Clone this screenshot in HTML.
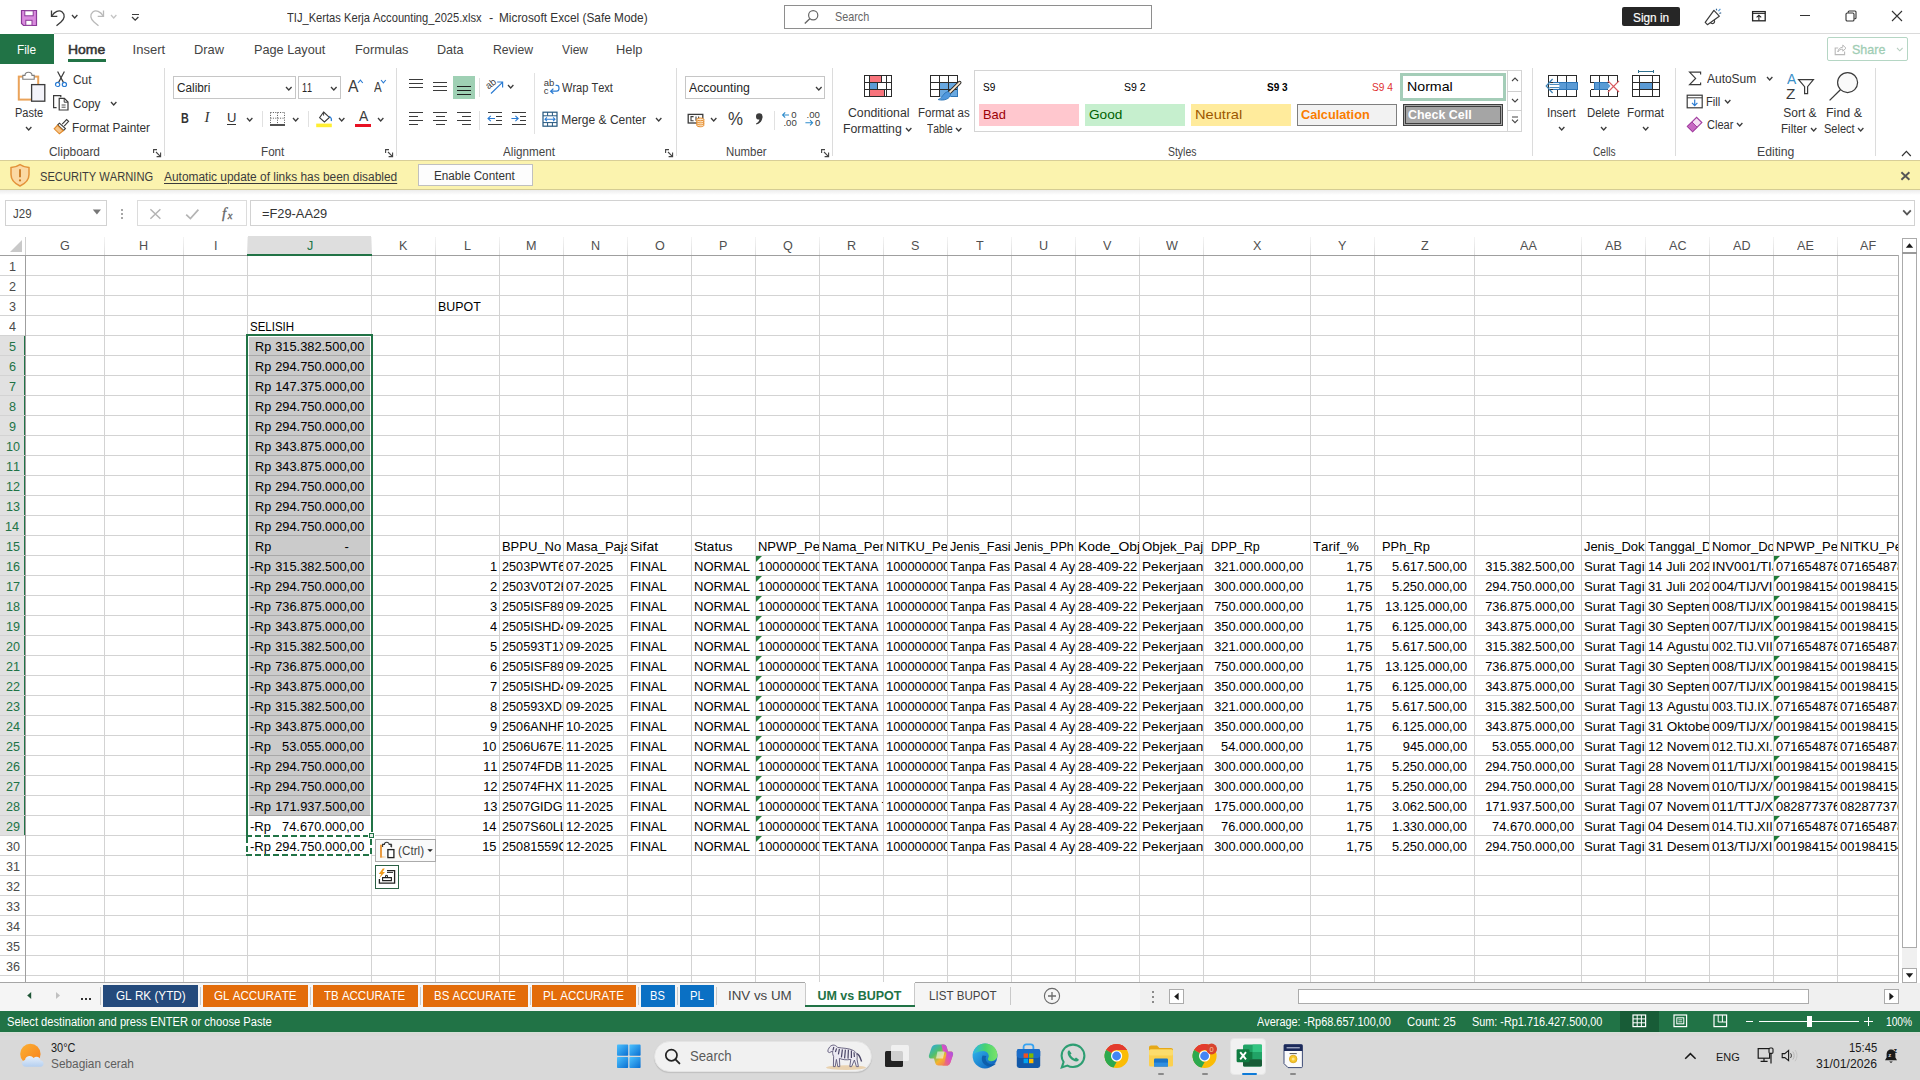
<!DOCTYPE html>
<html><head><meta charset="utf-8"><title>Excel</title>
<style>
html,body{margin:0;padding:0;}
body{width:1920px;height:1080px;overflow:hidden;background:#fff;position:relative;font-family:"Liberation Sans",sans-serif;font-kerning:none;}
.t{position:absolute;white-space:pre;line-height:1;}
.b{position:absolute;overflow:hidden;}
.c{position:absolute;overflow:hidden;height:19px;}
</style></head><body>
<div class="b" style="left:0px;top:0px;width:1920px;height:33px;background:#fff;"></div>
<div class="b" style="left:54px;top:33px;width:1866px;height:1px;background:#dadada;"></div>
<svg class="b" style="left:20px;top:9px;" width="18" height="18" viewBox="0 0 18 18"><path d="M1.5 1.5 H16.5 V16.5 H3.5 L1.5 14.5 Z" fill="#d98ade" stroke="#8a3a97" stroke-width="1.2"/>
<rect x="4.8" y="1.8" width="8.4" height="5" fill="#fff" stroke="#8a3a97" stroke-width="1"/>
<rect x="5.8" y="11.3" width="6.2" height="5" fill="#fff" stroke="#8a3a97" stroke-width="1"/></svg>
<svg class="b" style="left:49px;top:8px;" width="18" height="19" viewBox="0 0 18 19"><path d="M2.5 2.5 V8.3 H8.3" fill="none" stroke="#3b3b3b" stroke-width="1.3"/><path d="M2.8 8 C5.5 3.5 10 1.5 13.2 4 C16.5 6.8 15.5 11 12 14 L7.5 17.8" fill="none" stroke="#3b3b3b" stroke-width="1.3"/></svg>
<svg class="b" style="left:71px;top:14.3px;overflow:visible;" width="7.4" height="5" viewBox="0 0 7.4 5"><path d="M1 1 L3.7 4 L6.4 1" fill="none" stroke="#3b3b3b" stroke-width="1.3"/></svg>
<svg class="b" style="left:88px;top:8px;" width="18" height="19" viewBox="0 0 18 19"><path d="M15.5 2.5 V8.3 H9.7" fill="none" stroke="#b9b9b9" stroke-width="1.3"/><path d="M15.2 8 C12.5 3.5 8 1.5 4.8 4 C1.5 6.8 2.5 11 6 14 L10.5 17.8" fill="none" stroke="#b9b9b9" stroke-width="1.3"/></svg>
<svg class="b" style="left:109.5px;top:14.3px;overflow:visible;" width="7.4" height="5" viewBox="0 0 7.4 5"><path d="M1 1 L3.7 4 L6.4 1" fill="none" stroke="#c4c4c4" stroke-width="1.3"/></svg>
<div class="b" style="left:132px;top:14px;width:7px;height:1px;background:#3b3b3b;"></div>
<svg class="b" style="left:131.3px;top:15.8px;overflow:visible;" width="8.4" height="5.2" viewBox="0 0 8.4 5.2"><path d="M1 1 L4.2 4.2 L7.4 1" fill="none" stroke="#3b3b3b" stroke-width="1.3"/></svg>
<span class="t" style="left:287.05px;top:11px;font-size:13px;color:#333;transform:scaleX(0.8575);transform-origin:0 0;">TIJ_Kertas Kerja Accounting_2025.xlsx</span>
<span class="t" style="left:488.84px;top:11px;font-size:13px;color:#333;transform:scaleX(0.9767);transform-origin:0 0;">-</span>
<span class="t" style="left:498.83px;top:11px;font-size:13px;color:#333;transform:scaleX(0.9102);transform-origin:0 0;">Microsoft Excel (Safe Mode)</span>
<div class="b" style="left:784px;top:5px;width:368px;height:24px;background:#fff;border:1px solid #8e8e8e;box-sizing:border-box;"></div>
<svg class="b" style="left:803px;top:9px;" width="17" height="16" viewBox="0 0 17 16"><circle cx="10.2" cy="6.2" r="4.6" fill="none" stroke="#666" stroke-width="1.2"/><path d="M7 9.6 L1.8 14.6" stroke="#666" stroke-width="1.4"/></svg>
<span class="t" style="left:834.71px;top:10px;font-size:13px;color:#666;transform:scaleX(0.8326);transform-origin:0 0;">Search</span>
<div class="b" style="left:1622px;top:7px;width:58px;height:19px;background:#262626;border-radius:2px;"></div>
<span class="t" style="left:1633.26px;top:10.5px;font-size:13px;color:#fff;transform:scaleX(0.9083);transform-origin:0 0;-webkit-text-stroke:0.15px #fff;">Sign in</span>
<svg class="b" style="left:1703px;top:7px;" width="22" height="20" viewBox="0 0 22 20"><path d="M2.2 15.4 L10.9 3.3 L16.3 9.2 L4.4 17.7 Z" fill="none" stroke="#3b3b3b" stroke-width="1.2" stroke-linejoin="round"/>
<path d="M7.6 15.6 A1.9 1.9 0 0 0 11.2 13.2" fill="none" stroke="#3b3b3b" stroke-width="1.2"/>
<path d="M13.2 1.8 L13.8 3.4" stroke="#2d5f8f" stroke-width="1.1"/><path d="M15.4 4.2 L17.4 1.8" stroke="#5b9bd5" stroke-width="1.2"/><path d="M16.4 6.4 L18.2 5.8" stroke="#2d5f8f" stroke-width="1.1"/></svg>
<svg class="b" style="left:1751px;top:10px;" width="16" height="12" viewBox="0 0 16 12"><rect x="1.6" y="1.6" width="12.6" height="9.2" fill="none" stroke="#222" stroke-width="1.3"/><path d="M1.6 3.4 H14.2" stroke="#222" stroke-width="1"/><path d="M7.9 10.6 V5.4 M5.6 7.4 L7.9 5.2 L10.2 7.4" fill="none" stroke="#222" stroke-width="1.1"/></svg>
<div class="b" style="left:1800px;top:15px;width:10px;height:1px;background:#333;"></div>
<svg class="b" style="left:1845px;top:10px;" width="12" height="12" viewBox="0 0 12 12"><rect x="1" y="3" width="8" height="8" rx="1.3" fill="none" stroke="#333" stroke-width="1.1"/><path d="M3.2 2.8 V2 Q3.2 1 4.2 1 H10 Q11 1 11 2 V7.8 Q11 8.8 10 8.8 H9.3" fill="none" stroke="#333" stroke-width="1.1"/></svg>
<svg class="b" style="left:1891px;top:10px;" width="12" height="12" viewBox="0 0 12 12"><path d="M1 1 L11 11 M11 1 L1 11" stroke="#333" stroke-width="1.1"/></svg>
<div class="b" style="left:0px;top:34px;width:54px;height:30px;background:#217346;"></div>
<span class="t" style="left:17.23px;top:43px;font-size:13px;color:#fff;transform:scaleX(0.9118);transform-origin:0 0;">File</span>
<span class="t" style="left:68.26px;top:43px;font-size:13px;color:#333;transform:scaleX(1.0716);transform-origin:0 0;-webkit-text-stroke:0.5px #333;">Home</span>
<div class="b" style="left:68px;top:59px;width:38px;height:3px;background:#217346;"></div>
<span class="t" style="left:132.60px;top:43px;font-size:13px;color:#444;">Insert</span>
<span class="t" style="left:194.05px;top:43px;font-size:13px;color:#444;transform:scaleX(0.9863);transform-origin:0 0;">Draw</span>
<span class="t" style="left:253.76px;top:43px;font-size:13px;color:#444;transform:scaleX(0.9771);transform-origin:0 0;">Page Layout</span>
<span class="t" style="left:354.55px;top:43px;font-size:13px;color:#444;transform:scaleX(0.9859);transform-origin:0 0;">Formulas</span>
<span class="t" style="left:437.37px;top:43px;font-size:13px;color:#444;transform:scaleX(0.9699);transform-origin:0 0;">Data</span>
<span class="t" style="left:493.20px;top:43px;font-size:13px;color:#444;transform:scaleX(0.9377);transform-origin:0 0;">Review</span>
<span class="t" style="left:561.55px;top:43px;font-size:13px;color:#444;transform:scaleX(0.9200);transform-origin:0 0;">View</span>
<span class="t" style="left:616.34px;top:43px;font-size:13px;color:#444;transform:scaleX(0.9911);transform-origin:0 0;">Help</span>
<div class="b" style="left:1827px;top:37px;width:81px;height:24px;background:#fff;border:1px solid #b5d6c4;box-sizing:border-box;border-radius:2px;"></div>
<svg class="b" style="left:1834px;top:43px;" width="13" height="13" viewBox="0 0 13 13"><path d="M4.2 5 H1.2 V11.6 H10.6 V8.4" fill="none" stroke="#b9b9b9" stroke-width="1.1"/><path d="M3.8 9 C4.2 6 6.2 4.4 8.8 4.2 V2 L12 5.2 L8.8 8.2 V6.2 C6.6 6.2 4.9 7 3.8 9 Z" fill="none" stroke="#b9b9b9" stroke-width="1"/></svg>
<span class="t" style="left:1851.83px;top:43px;font-size:13px;color:#9fcdb4;transform:scaleX(0.9606);transform-origin:0 0;-webkit-text-stroke:0.3px #9fcdb4;">Share</span>
<svg class="b" style="left:1895.8px;top:47px;overflow:visible;" width="7.6" height="4.8" viewBox="0 0 7.6 4.8"><path d="M1 1 L3.8 3.8 L6.6 1" fill="none" stroke="#b9cfc2" stroke-width="1.1"/></svg>
<div class="b" style="left:0px;top:64px;width:1920px;height:96px;background:#fff;"></div>
<svg class="b" style="left:16px;top:70px;" width="31" height="34" viewBox="0 0 31 34"><rect x="2.8" y="6.6" width="19.4" height="23" fill="#fff" stroke="#eaa35a" stroke-width="2"/>
<path d="M6.8 9.2 V5.4 H9 C9 1.2 16 1.2 16 5.4 H18.2 V9.2 Z" fill="#fff" stroke="#7d7d7d" stroke-width="1.1"/>
<rect x="15.6" y="14.6" width="13.2" height="16.6" fill="#f3f3f9" stroke="#3b3b3b" stroke-width="1.3"/></svg>
<span class="t" style="left:15.30px;top:107px;font-size:12px;color:#333;transform:scaleX(0.9188);transform-origin:0 0;">Paste</span>
<svg class="b" style="left:24.6px;top:125.6px;overflow:visible;" width="7.4" height="5" viewBox="0 0 7.4 5"><path d="M1 1 L3.7 4 L6.4 1" fill="none" stroke="#3b3b3b" stroke-width="1.3"/></svg>
<svg class="b" style="left:54px;top:70px;" width="14" height="18" viewBox="0 0 14 18"><path d="M3.6 1.5 L9.4 12.4 M10.4 1.5 L4.6 12.4" stroke="#3b3b3b" stroke-width="1.2"/>
<circle cx="3.6" cy="14.4" r="2.1" fill="none" stroke="#2b7cd3" stroke-width="1.2"/><circle cx="10.4" cy="14.4" r="2.1" fill="none" stroke="#2b7cd3" stroke-width="1.2"/></svg>
<span class="t" style="left:72.60px;top:74px;font-size:12px;color:#333;transform:scaleX(0.9902);transform-origin:0 0;">Cut</span>
<svg class="b" style="left:52px;top:94px;" width="18" height="18" viewBox="0 0 18 18"><path d="M4.6 13.6 H1.6 V1.6 H8.8 V3.2" fill="none" stroke="#3b3b3b" stroke-width="1.2"/>
<path d="M7.2 4.4 H12.4 L16 8 V16 H7.2 Z" fill="#fff" stroke="#3b3b3b" stroke-width="1.2"/><path d="M12.2 4.6 V8.2 H15.8" fill="none" stroke="#3b3b3b" stroke-width="1"/><path d="M9.6 11 H13.6 M9.6 13.2 H13.6" stroke="#3b3b3b" stroke-width="0.9"/></svg>
<span class="t" style="left:72.60px;top:98px;font-size:12px;color:#333;transform:scaleX(0.9788);transform-origin:0 0;">Copy</span>
<svg class="b" style="left:109.6px;top:100.8px;overflow:visible;" width="7.4" height="5" viewBox="0 0 7.4 5"><path d="M1 1 L3.7 4 L6.4 1" fill="none" stroke="#3b3b3b" stroke-width="1.3"/></svg>
<svg class="b" style="left:53px;top:118px;" width="17" height="17" viewBox="0 0 17 17"><path d="M9.2 6.2 L13.6 1.6 L15.6 3.4 L11.2 8.2" fill="#fff" stroke="#3b3b3b" stroke-width="1.1"/>
<path d="M6.4 5.2 L12.4 10.6 L10.6 12.4 L4.6 7 Z" fill="#fff" stroke="#3b3b3b" stroke-width="1.1"/>
<path d="M4.4 7.4 L10.2 12.8 L6.4 15.8 L1.2 10.8 Z" fill="#f7c58a" stroke="#e08a2c" stroke-width="1.1"/></svg>
<span class="t" style="left:72.23px;top:122px;font-size:12px;color:#333;transform:scaleX(0.9824);transform-origin:0 0;">Format Painter</span>
<span class="t" style="left:49.40px;top:146px;font-size:12px;color:#444;transform:scaleX(0.9924);transform-origin:0 0;">Clipboard</span>
<svg class="b" style="left:153px;top:148.5px;" width="9" height="9" viewBox="0 0 9 9"><path d="M0.6 4 V0.6 H4" fill="none" stroke="#444" stroke-width="1.1"/><path d="M3 3 L7.6 7.6 M7.6 3.6 V7.6 H3.6" fill="none" stroke="#444" stroke-width="1.1"/></svg>
<div class="b" style="left:164px;top:68px;width:1px;height:88px;background:#dcdcdc;"></div>
<div class="b" style="left:173px;top:76px;width:123px;height:23px;background:#fff;border:1px solid #c6c6c6;box-sizing:border-box;"></div>
<span class="t" style="left:176.80px;top:82px;font-size:12px;color:#262626;transform:scaleX(0.9819);transform-origin:0 0;">Calibri</span>
<svg class="b" style="left:285.4px;top:86px;overflow:visible;" width="7.6" height="5" viewBox="0 0 7.6 5"><path d="M1 1 L3.8 4 L6.6 1" fill="none" stroke="#3b3b3b" stroke-width="1.3"/></svg>
<div class="b" style="left:298px;top:76px;width:43px;height:23px;background:#fff;border:1px solid #c6c6c6;box-sizing:border-box;"></div>
<span class="t" style="left:302.11px;top:82px;font-size:12px;color:#262626;transform:scaleX(0.7596);transform-origin:0 0;">11</span>
<svg class="b" style="left:330.2px;top:86px;overflow:visible;" width="7.6" height="5" viewBox="0 0 7.6 5"><path d="M1 1 L3.8 4 L6.6 1" fill="none" stroke="#3b3b3b" stroke-width="1.3"/></svg>
<span class="t" style="left:347.57px;top:77.6px;font-size:17px;color:#3b3b3b;transform:scaleX(0.9226);transform-origin:0 0;">A</span>
<svg class="b" style="left:357px;top:78.5px;" width="7" height="5" viewBox="0 0 7 5"><path d="M1 4 L3.4 1.2 L5.8 4" fill="none" stroke="#2b7cd3" stroke-width="1.1"/></svg>
<span class="t" style="left:373.78px;top:79.6px;font-size:14px;color:#3b3b3b;transform:scaleX(0.8187);transform-origin:0 0;">A</span>
<svg class="b" style="left:380px;top:79px;" width="7" height="5" viewBox="0 0 7 5"><path d="M1 1 L3.4 3.8 L5.8 1" fill="none" stroke="#2b7cd3" stroke-width="1.1"/></svg>
<span class="t" style="left:180.68px;top:111px;font-size:14px;color:#333;transform:scaleX(0.7730);transform-origin:0 0;font-weight:bold;">B</span>
<span class="t" style="left:204.41px;top:110px;font-size:15px;color:#333;font-style:italic;font-family:'Liberation Serif',serif;">I</span>
<span class="t" style="left:226.79px;top:111px;font-size:13px;color:#333;transform:scaleX(1.0024);transform-origin:0 0;">U</span>
<div class="b" style="left:227px;top:124px;width:9px;height:1px;background:#333;"></div>
<svg class="b" style="left:245.6px;top:116.6px;overflow:visible;" width="7.4" height="5" viewBox="0 0 7.4 5"><path d="M1 1 L3.7 4 L6.4 1" fill="none" stroke="#3b3b3b" stroke-width="1.3"/></svg>
<div class="b" style="left:262px;top:111px;width:1px;height:16px;background:#e1e1e1;"></div>
<svg class="b" style="left:269px;top:111px;" width="17" height="16" viewBox="0 0 17 16"><path d="M1.5 1.5 H15.5 M1.5 1.5 V13 M15.5 1.5 V13 M8.5 1.5 V13 M1.5 7.2 H15.5" stroke="#555" stroke-width="1" stroke-dasharray="1 1.4" fill="none"/>
<path d="M1 14 H16" stroke="#262626" stroke-width="1.6"/></svg>
<svg class="b" style="left:291.8px;top:116.6px;overflow:visible;" width="7.4" height="5" viewBox="0 0 7.4 5"><path d="M1 1 L3.7 4 L6.4 1" fill="none" stroke="#3b3b3b" stroke-width="1.3"/></svg>
<div class="b" style="left:308px;top:111px;width:1px;height:16px;background:#e1e1e1;"></div>
<svg class="b" style="left:316px;top:110px;" width="18" height="18" viewBox="0 0 18 18"><path d="M7.6 2 L13.4 7.4 L8.4 12 L3.6 7.6 Z" fill="#fff" stroke="#3b3b3b" stroke-width="1.1"/>
<path d="M7.6 2 V5.6" stroke="#3b3b3b" stroke-width="1"/>
<path d="M13.2 6.2 C15.4 7.6 15.8 9.2 15.2 11" fill="none" stroke="#2b7cd3" stroke-width="1.3"/>
<rect x="0.2" y="13.6" width="15.6" height="3.6" fill="#ffee32"/></svg>
<svg class="b" style="left:337.6px;top:116.6px;overflow:visible;" width="7.4" height="5" viewBox="0 0 7.4 5"><path d="M1 1 L3.7 4 L6.4 1" fill="none" stroke="#3b3b3b" stroke-width="1.3"/></svg>
<span class="t" style="left:358.97px;top:109.4px;font-size:14px;color:#3b3b3b;transform:scaleX(0.9910);transform-origin:0 0;">A</span>
<div class="b" style="left:355px;top:123.5px;width:16px;height:3.6px;background:#e81123;"></div>
<svg class="b" style="left:376.6px;top:116.6px;overflow:visible;" width="7.4" height="5" viewBox="0 0 7.4 5"><path d="M1 1 L3.7 4 L6.4 1" fill="none" stroke="#3b3b3b" stroke-width="1.3"/></svg>
<span class="t" style="left:261.14px;top:146px;font-size:12px;color:#444;transform:scaleX(0.9721);transform-origin:0 0;">Font</span>
<svg class="b" style="left:385px;top:148.5px;" width="9" height="9" viewBox="0 0 9 9"><path d="M0.6 4 V0.6 H4" fill="none" stroke="#444" stroke-width="1.1"/><path d="M3 3 L7.6 7.6 M7.6 3.6 V7.6 H3.6" fill="none" stroke="#444" stroke-width="1.1"/></svg>
<div class="b" style="left:396px;top:68px;width:1px;height:88px;background:#dcdcdc;"></div>
<div class="b" style="left:409px;top:79px;width:14px;height:1px;background:#3b3b3b;"></div>
<div class="b" style="left:409px;top:83px;width:14px;height:1px;background:#3b3b3b;"></div>
<div class="b" style="left:409px;top:87px;width:14px;height:1px;background:#3b3b3b;"></div>
<div class="b" style="left:433px;top:82px;width:14px;height:1px;background:#3b3b3b;"></div>
<div class="b" style="left:433px;top:86px;width:14px;height:1px;background:#3b3b3b;"></div>
<div class="b" style="left:433px;top:90px;width:14px;height:1px;background:#3b3b3b;"></div>
<div class="b" style="left:453px;top:76px;width:22px;height:23px;background:#9fd0b4;"></div>
<div class="b" style="left:457px;top:86px;width:14px;height:1px;background:#1f1f1f;"></div>
<div class="b" style="left:457px;top:90px;width:14px;height:1px;background:#1f1f1f;"></div>
<div class="b" style="left:457px;top:94px;width:14px;height:1px;background:#1f1f1f;"></div>
<div class="b" style="left:479px;top:78px;width:1px;height:19px;background:#e1e1e1;"></div>
<svg class="b" style="left:486px;top:77px;" width="19" height="18" viewBox="0 0 19 18"><text x="0.5" y="9.5" font-family="Liberation Sans" font-size="9.5" fill="#3b3b3b" transform="rotate(-38 6 8)">ab</text>
<path d="M5 16.5 L16.2 5.6 M11.2 5 H16.6 V10.4" fill="none" stroke="#2b7cd3" stroke-width="1.2"/></svg>
<svg class="b" style="left:506.8px;top:83.8px;overflow:visible;" width="7.4" height="5" viewBox="0 0 7.4 5"><path d="M1 1 L3.7 4 L6.4 1" fill="none" stroke="#3b3b3b" stroke-width="1.3"/></svg>
<div class="b" style="left:534px;top:73px;width:1px;height:61px;background:#e1e1e1;"></div>
<svg class="b" style="left:543px;top:78px;" width="17" height="18" viewBox="0 0 17 18"><text x="0.8" y="8.2" font-family="Liberation Sans" font-size="9.5" fill="#3b3b3b">ab</text>
<text x="0.8" y="16.4" font-family="Liberation Sans" font-size="9.5" fill="#3b3b3b">c</text>
<path d="M12.6 7.4 H14 Q16 7.4 16 10.2 Q16 13.2 13.6 13.2 H7.8 M10.4 10.6 L7.6 13.2 L10.4 15.8" fill="none" stroke="#2b7cd3" stroke-width="1.2"/></svg>
<span class="t" style="left:561.75px;top:82px;font-size:12px;color:#333;transform:scaleX(0.9203);transform-origin:0 0;">Wrap Text</span>
<div class="b" style="left:409px;top:112px;width:14px;height:1px;background:#3b3b3b;"></div>
<div class="b" style="left:409px;top:116px;width:9px;height:1px;background:#3b3b3b;"></div>
<div class="b" style="left:409px;top:120px;width:14px;height:1px;background:#3b3b3b;"></div>
<div class="b" style="left:409px;top:124px;width:9px;height:1px;background:#3b3b3b;"></div>
<div class="b" style="left:433px;top:112px;width:14px;height:1px;background:#3b3b3b;"></div>
<div class="b" style="left:435.5px;top:116px;width:9.0px;height:1px;background:#3b3b3b;"></div>
<div class="b" style="left:433px;top:120px;width:14px;height:1px;background:#3b3b3b;"></div>
<div class="b" style="left:435.5px;top:124px;width:9.0px;height:1px;background:#3b3b3b;"></div>
<div class="b" style="left:457px;top:112px;width:14px;height:1px;background:#3b3b3b;"></div>
<div class="b" style="left:462px;top:116px;width:9px;height:1px;background:#3b3b3b;"></div>
<div class="b" style="left:457px;top:120px;width:14px;height:1px;background:#3b3b3b;"></div>
<div class="b" style="left:462px;top:124px;width:9px;height:1px;background:#3b3b3b;"></div>
<div class="b" style="left:479px;top:111px;width:1px;height:19px;background:#e1e1e1;"></div>
<div class="b" style="left:488px;top:112px;width:14px;height:1px;background:#3b3b3b;"></div>
<div class="b" style="left:488px;top:124px;width:14px;height:1px;background:#3b3b3b;"></div>
<div class="b" style="left:496px;top:116px;width:6px;height:1px;background:#3b3b3b;"></div>
<div class="b" style="left:496px;top:120px;width:6px;height:1px;background:#3b3b3b;"></div>
<svg class="b" style="left:487px;top:114px;" width="9" height="9" viewBox="0 0 9 9"><path d="M8 4.5 H1.2 M3.8 1.8 L1 4.5 L3.8 7.2" fill="none" stroke="#2b7cd3" stroke-width="1.1"/></svg>
<div class="b" style="left:512px;top:112px;width:14px;height:1px;background:#3b3b3b;"></div>
<div class="b" style="left:512px;top:124px;width:14px;height:1px;background:#3b3b3b;"></div>
<div class="b" style="left:520px;top:116px;width:6px;height:1px;background:#3b3b3b;"></div>
<div class="b" style="left:520px;top:120px;width:6px;height:1px;background:#3b3b3b;"></div>
<svg class="b" style="left:511px;top:114px;" width="9" height="9" viewBox="0 0 9 9"><path d="M0.4 4.5 H7 M4.4 1.8 L7.2 4.5 L4.4 7.2" fill="none" stroke="#2b7cd3" stroke-width="1.1"/></svg>
<svg class="b" style="left:541.5px;top:110.5px;" width="16" height="17" viewBox="0 0 16 17"><rect x="1" y="1.2" width="14" height="14" fill="#fff" stroke="#24577f" stroke-width="1.2"/>
<path d="M1 4.8 H15 M1 11.6 H15 M5.6 1.2 V4.8 M10.4 1.2 V4.8 M5.6 11.6 V15.2 M10.4 11.6 V15.2" stroke="#24577f" stroke-width="1"/>
<path d="M3 8.2 H13 M4.9 6.3 L3 8.2 L4.9 10.1 M11.1 6.3 L13 8.2 L11.1 10.1" fill="none" stroke="#2b7cd3" stroke-width="1.1"/></svg>
<span class="t" style="left:561.21px;top:114px;font-size:12px;color:#333;">Merge &amp; Center</span>
<svg class="b" style="left:655.4px;top:116.6px;overflow:visible;" width="7.4" height="5" viewBox="0 0 7.4 5"><path d="M1 1 L3.7 4 L6.4 1" fill="none" stroke="#3b3b3b" stroke-width="1.3"/></svg>
<span class="t" style="left:502.78px;top:146px;font-size:12px;color:#444;transform:scaleX(0.9728);transform-origin:0 0;">Alignment</span>
<svg class="b" style="left:665.4px;top:148.5px;" width="9" height="9" viewBox="0 0 9 9"><path d="M0.6 4 V0.6 H4" fill="none" stroke="#444" stroke-width="1.1"/><path d="M3 3 L7.6 7.6 M7.6 3.6 V7.6 H3.6" fill="none" stroke="#444" stroke-width="1.1"/></svg>
<div class="b" style="left:676px;top:68px;width:1px;height:88px;background:#dcdcdc;"></div>
<div class="b" style="left:685px;top:76px;width:140px;height:23px;background:#fff;border:1px solid #c6c6c6;box-sizing:border-box;"></div>
<span class="t" style="left:689.38px;top:82px;font-size:12px;color:#262626;transform:scaleX(1.0243);transform-origin:0 0;">Accounting</span>
<svg class="b" style="left:814.6px;top:86px;overflow:visible;" width="7.6" height="5" viewBox="0 0 7.6 5"><path d="M1 1 L3.8 4 L6.6 1" fill="none" stroke="#3b3b3b" stroke-width="1.3"/></svg>
<svg class="b" style="left:687px;top:113px;" width="19" height="15" viewBox="0 0 19 15"><rect x="1.2" y="1.4" width="14.6" height="8.6" fill="#fff" stroke="#3b3b3b" stroke-width="1.3"/>
<path d="M6.6 3.6 H4 V7.8 H6.6 M9 3.6 V7.8 M11.6 3.6 V6" fill="none" stroke="#3b3b3b" stroke-width="1.1"/>
<path d="M9.8 6.4 V12.4 C9.8 14.2 16.8 14.2 16.8 12.4 V6.4" fill="#fde7c9" stroke="#e58a2a" stroke-width="1"/>
<ellipse cx="13.3" cy="6.4" rx="3.5" ry="1.4" fill="#fde7c9" stroke="#e58a2a" stroke-width="1"/>
<path d="M9.8 8.6 C9.8 10.2 16.8 10.2 16.8 8.6 M9.8 10.6 C9.8 12.2 16.8 12.2 16.8 10.6" fill="none" stroke="#e58a2a" stroke-width="0.9"/></svg>
<svg class="b" style="left:710px;top:116.6px;overflow:visible;" width="7.4" height="5" viewBox="0 0 7.4 5"><path d="M1 1 L3.7 4 L6.4 1" fill="none" stroke="#3b3b3b" stroke-width="1.3"/></svg>
<span class="t" style="left:727.80px;top:110px;font-size:18px;color:#3b3b3b;transform:scaleX(0.9374);transform-origin:0 0;">%</span>
<svg class="b" style="left:754px;top:112px;" width="11" height="14" viewBox="0 0 11 14"><circle cx="5.2" cy="4.4" r="3.2" fill="#3b3b3b"/><path d="M8.4 4.2 C8.6 8.6 6.2 11.4 2.4 12.6 L2 11.6 C4.6 10.4 5.6 8.6 5.4 6.6 Z" fill="#3b3b3b"/></svg>
<div class="b" style="left:774px;top:111px;width:1px;height:19px;background:#e1e1e1;"></div>
<svg class="b" style="left:781px;top:110px;" width="18" height="17" viewBox="0 0 18 17"><path d="M8 5 H1.8 M4.2 2.4 L1.6 5 L4.2 7.6" fill="none" stroke="#2f8ccc" stroke-width="1.1"/>
<text x="10.2" y="8.4" font-family="Liberation Sans" font-size="9.6" fill="#3b3b3b">0</text>
<text x="2.4" y="16.4" font-family="Liberation Sans" font-size="9.6" fill="#3b3b3b">.00</text></svg>
<svg class="b" style="left:804px;top:110px;" width="19" height="17" viewBox="0 0 19 17"><text x="2.6" y="8.4" font-family="Liberation Sans" font-size="9.6" fill="#3b3b3b">.00</text>
<path d="M1.4 12.8 H8.4 M6 10.2 L8.6 12.8 L6 15.4" fill="none" stroke="#2f8ccc" stroke-width="1.1"/>
<text x="11" y="16.4" font-family="Liberation Sans" font-size="9.6" fill="#3b3b3b">0</text></svg>
<span class="t" style="left:726.27px;top:146px;font-size:12px;color:#444;transform:scaleX(0.9495);transform-origin:0 0;">Number</span>
<svg class="b" style="left:821px;top:148.5px;" width="9" height="9" viewBox="0 0 9 9"><path d="M0.6 4 V0.6 H4" fill="none" stroke="#444" stroke-width="1.1"/><path d="M3 3 L7.6 7.6 M7.6 3.6 V7.6 H3.6" fill="none" stroke="#444" stroke-width="1.1"/></svg>
<div class="b" style="left:832px;top:68px;width:1px;height:88px;background:#dcdcdc;"></div>
<svg class="b" style="left:863px;top:74px;" width="30" height="24" viewBox="0 0 30 24"><g shape-rendering="crispEdges"><rect x="1.5" y="1.5" width="27" height="21" fill="#fff" stroke="#2b2b2b" stroke-width="1"/>
<rect x="6" y="2" width="13" height="6" fill="#f8747c"/><rect x="6" y="9" width="9" height="6" fill="#5b9bd5"/><rect x="6" y="16" width="15" height="6" fill="#f8747c"/>
<path d="M1.5 8.5 H28.5 M1.5 15.5 H28.5 M6.5 1.5 V22.5 M23.5 1.5 V22.5 M18.5 1.5 V8.5 M14.5 8.5 V15.5 M21.5 15.5 V22.5" stroke="#2b2b2b" stroke-width="1" fill="none"/></g></svg>
<span class="t" style="left:847.98px;top:107px;font-size:12px;color:#333;transform:scaleX(1.0234);transform-origin:0 0;">Conditional</span>
<span class="t" style="left:843.39px;top:123px;font-size:12px;color:#333;transform:scaleX(1.0253);transform-origin:0 0;">Formatting</span>
<svg class="b" style="left:904.6px;top:126.6px;overflow:visible;" width="7.4" height="5" viewBox="0 0 7.4 5"><path d="M1 1 L3.7 4 L6.4 1" fill="none" stroke="#3b3b3b" stroke-width="1.3"/></svg>
<svg class="b" style="left:929px;top:74px;" width="33" height="30" viewBox="0 0 33 30"><g shape-rendering="crispEdges"><rect x="1.5" y="1.5" width="27" height="21" fill="#fff" stroke="#2b2b2b" stroke-width="1"/>
<rect x="11" y="9" width="17.5" height="13.5" fill="#69a8e0"/>
<path d="M10.5 1.5 V22.5 M19.5 1.5 V22.5 M1.5 8.5 H28.5 M1.5 15.5 H28.5" stroke="#2b2b2b" stroke-width="1" fill="none"/>
<path d="M28.5 12 V22.5 H22" stroke="#2e75b6" stroke-width="1" fill="none"/></g>
<path d="M30.6 8.6 L19.4 19.6" stroke="#2b2b2b" stroke-width="3.6" stroke-linecap="round"/><path d="M30.6 8.6 L19.4 19.6" stroke="#fbe6cc" stroke-width="1.8" stroke-linecap="round"/>
<path d="M19 17.4 L21.6 20 C21.4 24.6 15.4 27.2 9.2 25.6 C13.6 24.6 13.8 18.6 19 17.4 Z" fill="#4f97dd" stroke="#2e75b6" stroke-width="0.9"/></svg>
<span class="t" style="left:918.46px;top:107px;font-size:12px;color:#333;transform:scaleX(0.9583);transform-origin:0 0;">Format as</span>
<span class="t" style="left:926.57px;top:123px;font-size:12px;color:#333;transform:scaleX(0.8557);transform-origin:0 0;">Table</span>
<svg class="b" style="left:955.2px;top:126.6px;overflow:visible;" width="7.4" height="5" viewBox="0 0 7.4 5"><path d="M1 1 L3.7 4 L6.4 1" fill="none" stroke="#3b3b3b" stroke-width="1.3"/></svg>
<div class="b" style="left:974px;top:70px;width:548px;height:62px;background:#fff;border:1px solid #d4d4d4;box-sizing:border-box;"></div>
<span class="t" style="left:982.54px;top:82px;font-size:10.5px;color:#000;transform:scaleX(0.9605);transform-origin:0 0;">S9</span>
<span class="t" style="left:1123.92px;top:82px;font-size:10.5px;color:#000;">S9 2</span>
<span class="t" style="left:1266.71px;top:82px;font-size:10.5px;color:#000;transform:scaleX(0.9561);transform-origin:0 0;font-weight:bold;">S9 3</span>
<span class="t" style="left:1371.74px;top:82px;font-size:10.5px;color:#e03030;transform:scaleX(0.9704);transform-origin:0 0;">S9 4</span>
<div class="b" style="left:1400px;top:73px;width:106px;height:28px;background:#fff;border:3px solid #a4cdb8;box-sizing:border-box;"></div>
<span class="t" style="left:1407.24px;top:80px;font-size:13.5px;color:#000;transform:scaleX(1.0507);transform-origin:0 0;">Normal</span>
<div class="b" style="left:979px;top:104px;width:100px;height:22px;background:#ffc7ce;"></div>
<span class="t" style="left:983.14px;top:108px;font-size:13.5px;color:#9c0006;transform:scaleX(0.9527);transform-origin:0 0;">Bad</span>
<div class="b" style="left:1085px;top:104px;width:100px;height:22px;background:#c6efce;"></div>
<span class="t" style="left:1088.91px;top:108px;font-size:13.5px;color:#006100;transform:scaleX(1.0103);transform-origin:0 0;">Good</span>
<div class="b" style="left:1191px;top:104px;width:100px;height:22px;background:#ffeb9c;"></div>
<span class="t" style="left:1195.00px;top:108px;font-size:13.5px;color:#9c5700;transform:scaleX(1.0841);transform-origin:0 0;">Neutral</span>
<div class="b" style="left:1297px;top:104px;width:100px;height:22px;background:#f2f2f2;border:1px solid #7f7f7f;box-sizing:border-box;"></div>
<span class="t" style="left:1301.28px;top:108px;font-size:13.5px;color:#fa7d00;transform:scaleX(0.9444);transform-origin:0 0;font-weight:bold;">Calculation</span>
<div class="b" style="left:1403px;top:104px;width:100px;height:22px;background:#a5a5a5;border:3px double #3f3f3f;box-sizing:border-box;"></div>
<span class="t" style="left:1407.89px;top:108px;font-size:13.5px;color:#fff;transform:scaleX(0.9212);transform-origin:0 0;font-weight:bold;">Check Cell</span>
<div class="b" style="left:1507px;top:70px;width:15px;height:62px;background:#fff;border:1px solid #d4d4d4;box-sizing:border-box;"></div>
<div class="b" style="left:1507px;top:91px;width:15px;height:1px;background:#cfcfcf;"></div>
<div class="b" style="left:1507px;top:110px;width:15px;height:1px;background:#cfcfcf;"></div>
<svg class="b" style="left:1510.5px;top:77px;" width="8" height="5" viewBox="0 0 8 5"><path d="M1 4 L4 1 L7 4" fill="none" stroke="#444" stroke-width="1.1"/></svg>
<svg class="b" style="left:1510.5px;top:97.5px;" width="8" height="5" viewBox="0 0 8 5"><path d="M1 1 L4 4 L7 1" fill="none" stroke="#444" stroke-width="1.1"/></svg>
<svg class="b" style="left:1510.5px;top:116px;" width="8" height="8" viewBox="0 0 8 8"><path d="M1 1 H7" stroke="#444" stroke-width="1"/><path d="M1 3.6 L4 6.6 L7 3.6" fill="none" stroke="#444" stroke-width="1.1"/></svg>
<span class="t" style="left:1168.33px;top:146px;font-size:12px;color:#444;transform:scaleX(0.8707);transform-origin:0 0;">Styles</span>
<div class="b" style="left:1532px;top:68px;width:1px;height:88px;background:#dcdcdc;"></div>
<svg class="b" style="left:1545px;top:74px;" width="36" height="24" viewBox="0 0 36 24"><g shape-rendering="crispEdges"><rect x="3.5" y="1.5" width="28" height="21" fill="#fff" stroke="#2b2b2b" stroke-width="1"/>
<path d="M3.5 8.5 H31.5 M3.5 15.5 H31.5 M12.5 1.5 V22.5 M21.5 1.5 V22.5" stroke="#2b2b2b" stroke-width="1" fill="none"/>
<rect x="8" y="8" width="25" height="8" fill="#5b9bd5"/><path d="M8 8.5 H33 M8 15.5 H33 M12.5 8 V16 M21.5 8 V16 M32.5 8 V16" stroke="#2e75b6" stroke-width="1" fill="none"/></g>
<path d="M14 10.6 H4.6 M14 13.4 H4.6" stroke="#fff" stroke-width="3.4"/>
<rect x="4" y="10.6" width="10.4" height="2.8" fill="#fff"/>
<path d="M14.4 10.4 H4.4 M14.4 13.6 H4.4" stroke="#3a80b4" stroke-width="1" fill="none"/>
<path d="M7.6 5 L1.2 12 L7.6 19" fill="none" stroke="#3a80b4" stroke-width="1.2"/></svg>
<span class="t" style="left:1547.14px;top:107px;font-size:12px;color:#333;transform:scaleX(0.9578);transform-origin:0 0;">Insert</span>
<svg class="b" style="left:1558px;top:126.4px;overflow:visible;" width="7.4" height="5" viewBox="0 0 7.4 5"><path d="M1 1 L3.7 4 L6.4 1" fill="none" stroke="#3b3b3b" stroke-width="1.3"/></svg>
<svg class="b" style="left:1588px;top:74px;" width="34" height="24" viewBox="0 0 34 24"><g shape-rendering="crispEdges"><path d="M2.5 8.5 V1.5 H29.5 V8.5 M2.5 15.5 V22.5 H29.5 V15.5 M11.5 1.5 V8.5 M20.5 1.5 V8.5 M11.5 15.5 V22.5 M20.5 15.5 V22.5 M2.5 8.5 H20 M2.5 15.5 H20" stroke="#2b2b2b" stroke-width="1" fill="none"/>
<rect x="6" y="8" width="13" height="8" fill="#5b9bd5"/><path d="M6 8.5 H19 M6 15.5 H19 M6.5 8 V16 M11.5 8 V16" stroke="#2e75b6" stroke-width="1" fill="none"/></g>
<path d="M19 8 L22.4 12 L19 16 Z" fill="#5b9bd5"/>
<path d="M20 6.8 L31 18 M31 6.8 L20 18" stroke="#d9595f" stroke-width="1.2"/></svg>
<span class="t" style="left:1587.47px;top:107px;font-size:12px;color:#333;transform:scaleX(0.9466);transform-origin:0 0;">Delete</span>
<svg class="b" style="left:1599.6px;top:126.4px;overflow:visible;" width="7.4" height="5" viewBox="0 0 7.4 5"><path d="M1 1 L3.7 4 L6.4 1" fill="none" stroke="#3b3b3b" stroke-width="1.3"/></svg>
<svg class="b" style="left:1630px;top:69px;" width="32" height="29" viewBox="0 0 32 29"><g shape-rendering="crispEdges"><path d="M8.5 2.5 H23.5 M8.5 1 V4 M23.5 1 V4" stroke="#2e6f8e" stroke-width="1" fill="none"/>
<rect x="2.5" y="6.5" width="27" height="21" fill="#fff" stroke="#2b2b2b" stroke-width="1"/>
<rect x="10" y="13" width="13" height="8" fill="#5b9bd5"/>
<path d="M2.5 13.5 H29.5 M2.5 20.5 H29.5 M9.5 6.5 V27.5 M22.5 6.5 V27.5" stroke="#2b2b2b" stroke-width="1" fill="none"/></g></svg>
<span class="t" style="left:1627.44px;top:107px;font-size:12px;color:#333;transform:scaleX(0.9748);transform-origin:0 0;">Format</span>
<svg class="b" style="left:1641.8px;top:126.4px;overflow:visible;" width="7.4" height="5" viewBox="0 0 7.4 5"><path d="M1 1 L3.7 4 L6.4 1" fill="none" stroke="#3b3b3b" stroke-width="1.3"/></svg>
<span class="t" style="left:1592.88px;top:146px;font-size:12px;color:#444;transform:scaleX(0.8506);transform-origin:0 0;">Cells</span>
<div class="b" style="left:1675px;top:68px;width:1px;height:88px;background:#dcdcdc;"></div>
<svg class="b" style="left:1688px;top:70.5px;" width="14" height="15" viewBox="0 0 14 15"><path d="M12.6 3.4 V1.2 H1.6 L7.6 7.4 L1.6 13.6 H12.6 V11.4" fill="none" stroke="#3b3b3b" stroke-width="1.2"/></svg>
<span class="t" style="left:1706.98px;top:73px;font-size:12px;color:#333;transform:scaleX(0.9970);transform-origin:0 0;">AutoSum</span>
<svg class="b" style="left:1765.8px;top:76.4px;overflow:visible;" width="7.4" height="5" viewBox="0 0 7.4 5"><path d="M1 1 L3.7 4 L6.4 1" fill="none" stroke="#3b3b3b" stroke-width="1.3"/></svg>
<svg class="b" style="left:1686px;top:93.5px;" width="18" height="15" viewBox="0 0 18 15"><rect x="1.2" y="1.2" width="15" height="12.6" fill="#fff" stroke="#3b3b3b" stroke-width="1.2"/><path d="M1.2 3.8 H16.2" stroke="#3b3b3b" stroke-width="1"/><path d="M8.7 5.6 V11.4 M6 8.8 L8.7 11.6 L11.4 8.8" fill="none" stroke="#2b7cd3" stroke-width="1.2"/></svg>
<span class="t" style="left:1706.48px;top:96px;font-size:12px;color:#333;transform:scaleX(0.9305);transform-origin:0 0;">Fill</span>
<svg class="b" style="left:1724px;top:99.4px;overflow:visible;" width="7.4" height="5" viewBox="0 0 7.4 5"><path d="M1 1 L3.7 4 L6.4 1" fill="none" stroke="#3b3b3b" stroke-width="1.3"/></svg>
<svg class="b" style="left:1686px;top:116px;" width="18" height="17" viewBox="0 0 18 17"><path d="M1.4 10.4 L10.6 1.4 L15.8 6.6 L6.6 15.6 Z" fill="#f6dff3" stroke="#a23ea0" stroke-width="1.2"/><path d="M1.4 10.4 L6 6 L11.2 11.2 L6.6 15.6 Z" fill="#c768c2" stroke="#a23ea0" stroke-width="1"/></svg>
<span class="t" style="left:1706.84px;top:119px;font-size:12px;color:#333;transform:scaleX(0.9186);transform-origin:0 0;">Clear</span>
<svg class="b" style="left:1736px;top:122.4px;overflow:visible;" width="7.4" height="5" viewBox="0 0 7.4 5"><path d="M1 1 L3.7 4 L6.4 1" fill="none" stroke="#3b3b3b" stroke-width="1.3"/></svg>
<span class="t" style="left:1786.57px;top:71.2px;font-size:15px;color:#3a8fc8;transform:scaleX(0.9250);transform-origin:0 0;">A</span>
<span class="t" style="left:1786.31px;top:85.6px;font-size:15px;color:#3b3b3b;transform:scaleX(1.0222);transform-origin:0 0;">Z</span>
<svg class="b" style="left:1797px;top:78px;" width="19" height="18" viewBox="0 0 19 18"><path d="M1.6 1.6 H16.4 L10.6 8.6 V15.6 H7.6 V8.6 Z" fill="#fff" stroke="#3b3b3b" stroke-width="1.2"/></svg>
<span class="t" style="left:1783.26px;top:107px;font-size:12px;color:#333;">Sort &amp;</span>
<span class="t" style="left:1781.25px;top:123px;font-size:12px;color:#333;transform:scaleX(0.9654);transform-origin:0 0;">Filter</span>
<svg class="b" style="left:1810.2px;top:126.6px;overflow:visible;" width="7.4" height="5" viewBox="0 0 7.4 5"><path d="M1 1 L3.7 4 L6.4 1" fill="none" stroke="#3b3b3b" stroke-width="1.3"/></svg>
<svg class="b" style="left:1828px;top:71px;" width="32" height="31" viewBox="0 0 32 31"><circle cx="19.6" cy="11.6" r="10" fill="#fafafa" stroke="#3b3b3b" stroke-width="1.2"/><path d="M12.4 18.8 L1.6 29.4" stroke="#3b3b3b" stroke-width="1.3"/></svg>
<span class="t" style="left:1825.98px;top:107px;font-size:12px;color:#333;transform:scaleX(1.0385);transform-origin:0 0;">Find &amp;</span>
<span class="t" style="left:1823.70px;top:123px;font-size:12px;color:#333;transform:scaleX(0.9169);transform-origin:0 0;">Select</span>
<svg class="b" style="left:1856.8px;top:126.6px;overflow:visible;" width="7.4" height="5" viewBox="0 0 7.4 5"><path d="M1 1 L3.7 4 L6.4 1" fill="none" stroke="#3b3b3b" stroke-width="1.3"/></svg>
<span class="t" style="left:1757.20px;top:146px;font-size:12px;color:#444;transform:scaleX(1.0191);transform-origin:0 0;">Editing</span>
<div class="b" style="left:1875px;top:68px;width:1px;height:88px;background:#dcdcdc;"></div>
<svg class="b" style="left:1901px;top:150px;" width="11" height="7" viewBox="0 0 11 7"><path d="M1 6 L5.4 1.4 L9.8 6" fill="none" stroke="#333" stroke-width="1.2"/></svg>
<div class="b" style="left:0px;top:160px;width:1920px;height:30px;background:#fbf3ae;"></div>
<div class="b" style="left:0px;top:160px;width:1920px;height:1px;background:#d8ce98;"></div>
<div class="b" style="left:0px;top:189px;width:1920px;height:1px;background:#d4cc94;"></div>
<div class="b" style="left:0px;top:190px;width:1920px;height:5px;background:linear-gradient(180deg,#ececec,#ffffff);"></div>
<svg class="b" style="left:9px;top:163px;" width="22" height="25" viewBox="0 0 22 25"><path d="M11 1.6 C8 3.6 5 4.4 2 4.6 V11.6 C2 17 6 20.8 11 23 C16 20.8 20 17 20 11.6 V4.6 C17 4.4 14 3.6 11 1.6 Z" fill="#fbd9a3" stroke="#e3923a" stroke-width="1.5"/>
<path d="M11 6.2 V14.2" stroke="#c9781f" stroke-width="1.8"/><circle cx="11" cy="17.4" r="1.1" fill="#c9781f"/></svg>
<span class="t" style="left:40.29px;top:171px;font-size:12.5px;color:#3b3b3b;transform:scaleX(0.8902);transform-origin:0 0;">SECURITY WARNING</span>
<span class="t" style="left:163.98px;top:171px;font-size:12.5px;color:#3b3b3b;transform:scaleX(0.9533);transform-origin:0 0;text-decoration:underline;text-underline-offset:2px;">Automatic update of links has been disabled</span>
<div class="b" style="left:418px;top:164px;width:115px;height:22px;background:#fdfdfd;border:1px solid #c0c0c0;box-sizing:border-box;"></div>
<span class="t" style="left:434.04px;top:170px;font-size:12.5px;color:#333;transform:scaleX(0.9358);transform-origin:0 0;">Enable Content</span>
<svg class="b" style="left:1899.5px;top:170.5px;" width="11" height="10" viewBox="0 0 11 10"><path d="M1.4 1.2 L9.4 8.8 M9.4 1.2 L1.4 8.8" stroke="#555" stroke-width="1.9"/></svg>
<div class="b" style="left:0px;top:195px;width:1920px;height:41px;background:#fff;"></div>
<div class="b" style="left:5px;top:200px;width:102px;height:26px;background:#fff;border:1px solid #d2d2d2;box-sizing:border-box;"></div>
<span class="t" style="left:12.62px;top:207px;font-size:13px;color:#444;transform:scaleX(0.8838);transform-origin:0 0;">J29</span>
<svg class="b" style="left:92px;top:209px;" width="10" height="6" viewBox="0 0 10 6"><path d="M0.8 0.6 H9 L4.9 5.4 Z" fill="#777"/></svg>
<div class="b" style="left:121px;top:208.5px;width:2px;height:2px;background:#8a8a8a;border-radius:1px;"></div>
<div class="b" style="left:121px;top:212.5px;width:2px;height:2px;background:#8a8a8a;border-radius:1px;"></div>
<div class="b" style="left:121px;top:216.5px;width:2px;height:2px;background:#8a8a8a;border-radius:1px;"></div>
<div class="b" style="left:137px;top:200px;width:110px;height:26px;background:#fff;border:1px solid #dcdcdc;box-sizing:border-box;"></div>
<svg class="b" style="left:149px;top:207.5px;" width="13" height="12" viewBox="0 0 13 12"><path d="M1.4 1.2 L11.4 10.8 M11.4 1.2 L1.4 10.8" stroke="#b4b4b4" stroke-width="1.5"/></svg>
<svg class="b" style="left:185px;top:207.5px;" width="15" height="12" viewBox="0 0 15 12"><path d="M1.2 6.6 L5.4 10.6 L13.4 1.6" fill="none" stroke="#b4b4b4" stroke-width="1.7"/></svg>
<span class="t" style="left:221.89px;top:206px;font-size:15px;color:#666;font-style:italic;font-family:'Liberation Serif',serif;-webkit-text-stroke:0.3px #666;">f</span>
<span class="t" style="left:227.82px;top:210.5px;font-size:10.5px;color:#666;font-style:italic;font-family:'Liberation Serif',serif;-webkit-text-stroke:0.3px #666;">x</span>
<div class="b" style="left:250px;top:200px;width:1665px;height:26px;background:#fff;border:1px solid #d2d2d2;box-sizing:border-box;"></div>
<span class="t" style="left:261.77px;top:207px;font-size:13px;color:#333;transform:scaleX(0.9865);transform-origin:0 0;">=F29-AA29</span>
<svg class="b" style="left:1902px;top:209px;" width="10" height="8" viewBox="0 0 10 8"><path d="M1.2 1.4 L5 5.4 L8.8 1.4" fill="none" stroke="#555" stroke-width="1.8"/></svg>
<div class="b" style="left:0px;top:236px;width:1899px;height:747px;background:#fff;"></div>
<div class="b" style="left:248px;top:236px;width:123px;height:18px;background:#dedede;"></div>
<div class="b" style="left:0px;top:336px;width:24px;height:499px;background:#e1e1e1;"></div>
<div class="b" style="left:24px;top:335px;width:2px;height:501px;background:#217346;"></div>
<div class="b" style="left:0;top:236px;width:1899px;height:747px;overflow:hidden"><div style="position:absolute;left:0;top:39px;width:1898px;height:1px;background:#d3d3d3"></div><div style="position:absolute;left:0;top:59px;width:1898px;height:1px;background:#d3d3d3"></div><div style="position:absolute;left:0;top:79px;width:1898px;height:1px;background:#d3d3d3"></div><div style="position:absolute;left:0;top:99px;width:1898px;height:1px;background:#d3d3d3"></div><div style="position:absolute;left:0;top:119px;width:1898px;height:1px;background:#d3d3d3"></div><div style="position:absolute;left:0;top:139px;width:1898px;height:1px;background:#d3d3d3"></div><div style="position:absolute;left:0;top:159px;width:1898px;height:1px;background:#d3d3d3"></div><div style="position:absolute;left:0;top:179px;width:1898px;height:1px;background:#d3d3d3"></div><div style="position:absolute;left:0;top:199px;width:1898px;height:1px;background:#d3d3d3"></div><div style="position:absolute;left:0;top:219px;width:1898px;height:1px;background:#d3d3d3"></div><div style="position:absolute;left:0;top:239px;width:1898px;height:1px;background:#d3d3d3"></div><div style="position:absolute;left:0;top:259px;width:1898px;height:1px;background:#d3d3d3"></div><div style="position:absolute;left:0;top:279px;width:1898px;height:1px;background:#d3d3d3"></div><div style="position:absolute;left:0;top:299px;width:1898px;height:1px;background:#d3d3d3"></div><div style="position:absolute;left:0;top:319px;width:1898px;height:1px;background:#d3d3d3"></div><div style="position:absolute;left:0;top:339px;width:1898px;height:1px;background:#d3d3d3"></div><div style="position:absolute;left:0;top:359px;width:1898px;height:1px;background:#d3d3d3"></div><div style="position:absolute;left:0;top:379px;width:1898px;height:1px;background:#d3d3d3"></div><div style="position:absolute;left:0;top:399px;width:1898px;height:1px;background:#d3d3d3"></div><div style="position:absolute;left:0;top:419px;width:1898px;height:1px;background:#d3d3d3"></div><div style="position:absolute;left:0;top:439px;width:1898px;height:1px;background:#d3d3d3"></div><div style="position:absolute;left:0;top:459px;width:1898px;height:1px;background:#d3d3d3"></div><div style="position:absolute;left:0;top:479px;width:1898px;height:1px;background:#d3d3d3"></div><div style="position:absolute;left:0;top:499px;width:1898px;height:1px;background:#d3d3d3"></div><div style="position:absolute;left:0;top:519px;width:1898px;height:1px;background:#d3d3d3"></div><div style="position:absolute;left:0;top:539px;width:1898px;height:1px;background:#d3d3d3"></div><div style="position:absolute;left:0;top:559px;width:1898px;height:1px;background:#d3d3d3"></div><div style="position:absolute;left:0;top:579px;width:1898px;height:1px;background:#d3d3d3"></div><div style="position:absolute;left:0;top:599px;width:1898px;height:1px;background:#d3d3d3"></div><div style="position:absolute;left:0;top:619px;width:1898px;height:1px;background:#d3d3d3"></div><div style="position:absolute;left:0;top:639px;width:1898px;height:1px;background:#d3d3d3"></div><div style="position:absolute;left:0;top:659px;width:1898px;height:1px;background:#d3d3d3"></div><div style="position:absolute;left:0;top:679px;width:1898px;height:1px;background:#d3d3d3"></div><div style="position:absolute;left:0;top:699px;width:1898px;height:1px;background:#d3d3d3"></div><div style="position:absolute;left:0;top:719px;width:1898px;height:1px;background:#d3d3d3"></div><div style="position:absolute;left:0;top:739px;width:1898px;height:1px;background:#d3d3d3"></div><div style="position:absolute;left:104px;top:20px;width:1px;height:727px;background:#d3d3d3"></div><div style="position:absolute;left:104px;top:1px;width:1px;height:18px;background:linear-gradient(180deg,#f4f4f4,#dedede)"></div><div style="position:absolute;left:183px;top:20px;width:1px;height:727px;background:#d3d3d3"></div><div style="position:absolute;left:183px;top:1px;width:1px;height:18px;background:linear-gradient(180deg,#f4f4f4,#dedede)"></div><div style="position:absolute;left:247px;top:20px;width:1px;height:727px;background:#d3d3d3"></div><div style="position:absolute;left:247px;top:1px;width:1px;height:18px;background:linear-gradient(180deg,#f4f4f4,#dedede)"></div><div style="position:absolute;left:371px;top:20px;width:1px;height:727px;background:#d3d3d3"></div><div style="position:absolute;left:371px;top:1px;width:1px;height:18px;background:linear-gradient(180deg,#f4f4f4,#dedede)"></div><div style="position:absolute;left:435px;top:20px;width:1px;height:727px;background:#d3d3d3"></div><div style="position:absolute;left:435px;top:1px;width:1px;height:18px;background:linear-gradient(180deg,#f4f4f4,#dedede)"></div><div style="position:absolute;left:499px;top:20px;width:1px;height:727px;background:#d3d3d3"></div><div style="position:absolute;left:499px;top:1px;width:1px;height:18px;background:linear-gradient(180deg,#f4f4f4,#dedede)"></div><div style="position:absolute;left:563px;top:20px;width:1px;height:727px;background:#d3d3d3"></div><div style="position:absolute;left:563px;top:1px;width:1px;height:18px;background:linear-gradient(180deg,#f4f4f4,#dedede)"></div><div style="position:absolute;left:627px;top:20px;width:1px;height:727px;background:#d3d3d3"></div><div style="position:absolute;left:627px;top:1px;width:1px;height:18px;background:linear-gradient(180deg,#f4f4f4,#dedede)"></div><div style="position:absolute;left:691px;top:20px;width:1px;height:727px;background:#d3d3d3"></div><div style="position:absolute;left:691px;top:1px;width:1px;height:18px;background:linear-gradient(180deg,#f4f4f4,#dedede)"></div><div style="position:absolute;left:755px;top:20px;width:1px;height:727px;background:#d3d3d3"></div><div style="position:absolute;left:755px;top:1px;width:1px;height:18px;background:linear-gradient(180deg,#f4f4f4,#dedede)"></div><div style="position:absolute;left:819px;top:20px;width:1px;height:727px;background:#d3d3d3"></div><div style="position:absolute;left:819px;top:1px;width:1px;height:18px;background:linear-gradient(180deg,#f4f4f4,#dedede)"></div><div style="position:absolute;left:883px;top:20px;width:1px;height:727px;background:#d3d3d3"></div><div style="position:absolute;left:883px;top:1px;width:1px;height:18px;background:linear-gradient(180deg,#f4f4f4,#dedede)"></div><div style="position:absolute;left:947px;top:20px;width:1px;height:727px;background:#d3d3d3"></div><div style="position:absolute;left:947px;top:1px;width:1px;height:18px;background:linear-gradient(180deg,#f4f4f4,#dedede)"></div><div style="position:absolute;left:1011px;top:20px;width:1px;height:727px;background:#d3d3d3"></div><div style="position:absolute;left:1011px;top:1px;width:1px;height:18px;background:linear-gradient(180deg,#f4f4f4,#dedede)"></div><div style="position:absolute;left:1075px;top:20px;width:1px;height:727px;background:#d3d3d3"></div><div style="position:absolute;left:1075px;top:1px;width:1px;height:18px;background:linear-gradient(180deg,#f4f4f4,#dedede)"></div><div style="position:absolute;left:1139px;top:20px;width:1px;height:727px;background:#d3d3d3"></div><div style="position:absolute;left:1139px;top:1px;width:1px;height:18px;background:linear-gradient(180deg,#f4f4f4,#dedede)"></div><div style="position:absolute;left:1203px;top:20px;width:1px;height:727px;background:#d3d3d3"></div><div style="position:absolute;left:1203px;top:1px;width:1px;height:18px;background:linear-gradient(180deg,#f4f4f4,#dedede)"></div><div style="position:absolute;left:1310px;top:20px;width:1px;height:727px;background:#d3d3d3"></div><div style="position:absolute;left:1310px;top:1px;width:1px;height:18px;background:linear-gradient(180deg,#f4f4f4,#dedede)"></div><div style="position:absolute;left:1374px;top:20px;width:1px;height:727px;background:#d3d3d3"></div><div style="position:absolute;left:1374px;top:1px;width:1px;height:18px;background:linear-gradient(180deg,#f4f4f4,#dedede)"></div><div style="position:absolute;left:1474px;top:20px;width:1px;height:727px;background:#d3d3d3"></div><div style="position:absolute;left:1474px;top:1px;width:1px;height:18px;background:linear-gradient(180deg,#f4f4f4,#dedede)"></div><div style="position:absolute;left:1581px;top:20px;width:1px;height:727px;background:#d3d3d3"></div><div style="position:absolute;left:1581px;top:1px;width:1px;height:18px;background:linear-gradient(180deg,#f4f4f4,#dedede)"></div><div style="position:absolute;left:1645px;top:20px;width:1px;height:727px;background:#d3d3d3"></div><div style="position:absolute;left:1645px;top:1px;width:1px;height:18px;background:linear-gradient(180deg,#f4f4f4,#dedede)"></div><div style="position:absolute;left:1709px;top:20px;width:1px;height:727px;background:#d3d3d3"></div><div style="position:absolute;left:1709px;top:1px;width:1px;height:18px;background:linear-gradient(180deg,#f4f4f4,#dedede)"></div><div style="position:absolute;left:1773px;top:20px;width:1px;height:727px;background:#d3d3d3"></div><div style="position:absolute;left:1773px;top:1px;width:1px;height:18px;background:linear-gradient(180deg,#f4f4f4,#dedede)"></div><div style="position:absolute;left:1837px;top:20px;width:1px;height:727px;background:#d3d3d3"></div><div style="position:absolute;left:1837px;top:1px;width:1px;height:18px;background:linear-gradient(180deg,#f4f4f4,#dedede)"></div><div style="position:absolute;left:1898px;top:20px;width:1px;height:727px;background:#d3d3d3"></div></div>
<div class="b" style="left:0px;top:255px;width:1899px;height:1px;background:#9f9f9f;"></div>
<div class="b" style="left:247px;top:254px;width:125px;height:2px;background:#217346;"></div>
<div class="b" style="left:25px;top:255px;width:1px;height:728px;background:#9f9f9f;"></div>
<div class="b" style="left:25px;top:237px;width:1px;height:18px;background:#d0d0d0;"></div>
<div class="b" style="left:1898px;top:255px;width:1px;height:728px;background:#b0b0b0;"></div>
<div class="b" style="left:0px;top:982px;width:1899px;height:1px;background:#a6a6a6;"></div>
<svg class="b" style="left:9px;top:239px;" width="14" height="14" viewBox="0 0 14 14"><path d="M13 1 L13 13 L1 13 Z" fill="#c9c9c9"/></svg>
<span class="t" style="left:60.25px;top:239px;font-size:13px;color:#505050;transform:scaleX(0.9700);transform-origin:0 0;">G</span>
<span class="t" style="left:139.44px;top:239px;font-size:13px;color:#505050;transform:scaleX(0.9700);transform-origin:0 0;">H</span>
<span class="t" style="left:213.75px;top:239px;font-size:13px;color:#505050;transform:scaleX(0.9700);transform-origin:0 0;">I</span>
<span class="t" style="left:306.72px;top:239px;font-size:13px;color:#217346;transform:scaleX(0.9700);transform-origin:0 0;">J</span>
<span class="t" style="left:398.85px;top:239px;font-size:13px;color:#505050;transform:scaleX(0.9700);transform-origin:0 0;">K</span>
<span class="t" style="left:463.69px;top:239px;font-size:13px;color:#505050;transform:scaleX(0.9700);transform-origin:0 0;">L</span>
<span class="t" style="left:526.25px;top:239px;font-size:13px;color:#505050;transform:scaleX(0.9700);transform-origin:0 0;">M</span>
<span class="t" style="left:590.94px;top:239px;font-size:13px;color:#505050;transform:scaleX(0.9700);transform-origin:0 0;">N</span>
<span class="t" style="left:654.60px;top:239px;font-size:13px;color:#505050;transform:scaleX(0.9700);transform-origin:0 0;">O</span>
<span class="t" style="left:719.11px;top:239px;font-size:13px;color:#505050;transform:scaleX(0.9700);transform-origin:0 0;">P</span>
<span class="t" style="left:782.60px;top:239px;font-size:13px;color:#505050;transform:scaleX(0.9700);transform-origin:0 0;">Q</span>
<span class="t" style="left:846.72px;top:239px;font-size:13px;color:#505050;transform:scaleX(0.9700);transform-origin:0 0;">R</span>
<span class="t" style="left:911.30px;top:239px;font-size:13px;color:#505050;transform:scaleX(0.9700);transform-origin:0 0;">S</span>
<span class="t" style="left:975.65px;top:239px;font-size:13px;color:#505050;transform:scaleX(0.9700);transform-origin:0 0;">T</span>
<span class="t" style="left:1038.95px;top:239px;font-size:13px;color:#505050;transform:scaleX(0.9700);transform-origin:0 0;">U</span>
<span class="t" style="left:1103.29px;top:239px;font-size:13px;color:#505050;transform:scaleX(0.9700);transform-origin:0 0;">V</span>
<span class="t" style="left:1165.54px;top:239px;font-size:13px;color:#505050;transform:scaleX(0.9700);transform-origin:0 0;">W</span>
<span class="t" style="left:1252.79px;top:239px;font-size:13px;color:#505050;transform:scaleX(0.9700);transform-origin:0 0;">X</span>
<span class="t" style="left:1338.29px;top:239px;font-size:13px;color:#505050;transform:scaleX(0.9700);transform-origin:0 0;">Y</span>
<span class="t" style="left:1420.65px;top:239px;font-size:13px;color:#505050;transform:scaleX(0.9700);transform-origin:0 0;">Z</span>
<span class="t" style="left:1519.59px;top:239px;font-size:13px;color:#505050;transform:scaleX(0.9700);transform-origin:0 0;">AA</span>
<span class="t" style="left:1605.41px;top:239px;font-size:13px;color:#505050;transform:scaleX(0.9700);transform-origin:0 0;">AB</span>
<span class="t" style="left:1668.97px;top:239px;font-size:13px;color:#505050;transform:scaleX(0.9700);transform-origin:0 0;">AC</span>
<span class="t" style="left:1733.03px;top:239px;font-size:13px;color:#505050;transform:scaleX(0.9700);transform-origin:0 0;">AD</span>
<span class="t" style="left:1797.35px;top:239px;font-size:13px;color:#505050;transform:scaleX(0.9700);transform-origin:0 0;">AE</span>
<span class="t" style="left:1860.18px;top:239px;font-size:13px;color:#505050;transform:scaleX(0.9700);transform-origin:0 0;">AF</span>
<span class="t" style="left:9.12px;top:260px;font-size:13px;color:#4a4a4a;transform:scaleX(0.9700);transform-origin:0 0;">1</span>
<span class="t" style="left:9.29px;top:280px;font-size:13px;color:#4a4a4a;transform:scaleX(0.9700);transform-origin:0 0;">2</span>
<span class="t" style="left:9.33px;top:300px;font-size:13px;color:#4a4a4a;transform:scaleX(0.9700);transform-origin:0 0;">3</span>
<span class="t" style="left:9.33px;top:320px;font-size:13px;color:#4a4a4a;transform:scaleX(0.9700);transform-origin:0 0;">4</span>
<span class="t" style="left:9.31px;top:340px;font-size:13px;color:#217346;transform:scaleX(0.9700);transform-origin:0 0;">5</span>
<span class="t" style="left:9.25px;top:360px;font-size:13px;color:#217346;transform:scaleX(0.9700);transform-origin:0 0;">6</span>
<span class="t" style="left:9.29px;top:380px;font-size:13px;color:#217346;transform:scaleX(0.9700);transform-origin:0 0;">7</span>
<span class="t" style="left:9.29px;top:400px;font-size:13px;color:#217346;transform:scaleX(0.9700);transform-origin:0 0;">8</span>
<span class="t" style="left:9.30px;top:420px;font-size:13px;color:#217346;transform:scaleX(0.9700);transform-origin:0 0;">9</span>
<span class="t" style="left:5.55px;top:440px;font-size:13px;color:#217346;transform:scaleX(0.9700);transform-origin:0 0;">10</span>
<span class="t" style="left:5.61px;top:460px;font-size:13px;color:#217346;transform:scaleX(0.9700);transform-origin:0 0;">11</span>
<span class="t" style="left:5.62px;top:480px;font-size:13px;color:#217346;transform:scaleX(0.9700);transform-origin:0 0;">12</span>
<span class="t" style="left:5.58px;top:500px;font-size:13px;color:#217346;transform:scaleX(0.9700);transform-origin:0 0;">13</span>
<span class="t" style="left:5.49px;top:520px;font-size:13px;color:#217346;transform:scaleX(0.9700);transform-origin:0 0;">14</span>
<span class="t" style="left:5.57px;top:540px;font-size:13px;color:#217346;transform:scaleX(0.9700);transform-origin:0 0;">15</span>
<span class="t" style="left:5.58px;top:560px;font-size:13px;color:#217346;transform:scaleX(0.9700);transform-origin:0 0;">16</span>
<span class="t" style="left:5.62px;top:580px;font-size:13px;color:#217346;transform:scaleX(0.9700);transform-origin:0 0;">17</span>
<span class="t" style="left:5.58px;top:600px;font-size:13px;color:#217346;transform:scaleX(0.9700);transform-origin:0 0;">18</span>
<span class="t" style="left:5.61px;top:620px;font-size:13px;color:#217346;transform:scaleX(0.9700);transform-origin:0 0;">19</span>
<span class="t" style="left:5.72px;top:640px;font-size:13px;color:#217346;transform:scaleX(0.9700);transform-origin:0 0;">20</span>
<span class="t" style="left:5.78px;top:660px;font-size:13px;color:#217346;transform:scaleX(0.9700);transform-origin:0 0;">21</span>
<span class="t" style="left:5.79px;top:680px;font-size:13px;color:#217346;transform:scaleX(0.9700);transform-origin:0 0;">22</span>
<span class="t" style="left:5.75px;top:700px;font-size:13px;color:#217346;transform:scaleX(0.9700);transform-origin:0 0;">23</span>
<span class="t" style="left:5.65px;top:720px;font-size:13px;color:#217346;transform:scaleX(0.9700);transform-origin:0 0;">24</span>
<span class="t" style="left:5.73px;top:740px;font-size:13px;color:#217346;transform:scaleX(0.9700);transform-origin:0 0;">25</span>
<span class="t" style="left:5.75px;top:760px;font-size:13px;color:#217346;transform:scaleX(0.9700);transform-origin:0 0;">26</span>
<span class="t" style="left:5.79px;top:780px;font-size:13px;color:#217346;transform:scaleX(0.9700);transform-origin:0 0;">27</span>
<span class="t" style="left:5.74px;top:800px;font-size:13px;color:#217346;transform:scaleX(0.9700);transform-origin:0 0;">28</span>
<span class="t" style="left:5.77px;top:820px;font-size:13px;color:#217346;transform:scaleX(0.9700);transform-origin:0 0;">29</span>
<span class="t" style="left:5.79px;top:840px;font-size:13px;color:#4a4a4a;transform:scaleX(0.9700);transform-origin:0 0;">30</span>
<span class="t" style="left:5.85px;top:860px;font-size:13px;color:#4a4a4a;transform:scaleX(0.9700);transform-origin:0 0;">31</span>
<span class="t" style="left:5.86px;top:880px;font-size:13px;color:#4a4a4a;transform:scaleX(0.9700);transform-origin:0 0;">32</span>
<span class="t" style="left:5.82px;top:900px;font-size:13px;color:#4a4a4a;transform:scaleX(0.9700);transform-origin:0 0;">33</span>
<span class="t" style="left:5.73px;top:920px;font-size:13px;color:#4a4a4a;transform:scaleX(0.9700);transform-origin:0 0;">34</span>
<span class="t" style="left:5.81px;top:940px;font-size:13px;color:#4a4a4a;transform:scaleX(0.9700);transform-origin:0 0;">35</span>
<span class="t" style="left:5.82px;top:960px;font-size:13px;color:#4a4a4a;transform:scaleX(0.9700);transform-origin:0 0;">36</span>
<div class="c" style="left:436px;top:296px;width:63px;overflow:visible;"><span class="t" style="left:1.90px;top:4px;font-size:13px;color:#000;transform:scaleX(0.954);transform-origin:0 0;">BUPOT</span></div>
<div class="c" style="left:248px;top:316px;width:123px;"><span class="t" style="left:1.90px;top:4px;font-size:13px;color:#000;transform:scaleX(0.885);transform-origin:0 0;">SELISIH</span></div>
<div class="c" style="left:248px;top:336px;width:123px;"><span class="t" style="left:6.56px;top:4px;font-size:13px;color:#000;transform:scaleX(0.9730);transform-origin:0 0;">Rp</span><span class="t" style="left:25.94px;top:4px;font-size:13px;color:#000;transform:scaleX(0.987);transform-origin:100% 0;">315.382.500,00</span></div>
<div class="c" style="left:248px;top:356px;width:123px;"><span class="t" style="left:6.56px;top:4px;font-size:13px;color:#000;transform:scaleX(0.9730);transform-origin:0 0;">Rp</span><span class="t" style="left:25.94px;top:4px;font-size:13px;color:#000;transform:scaleX(0.987);transform-origin:100% 0;">294.750.000,00</span></div>
<div class="c" style="left:248px;top:376px;width:123px;"><span class="t" style="left:6.56px;top:4px;font-size:13px;color:#000;transform:scaleX(0.9730);transform-origin:0 0;">Rp</span><span class="t" style="left:25.94px;top:4px;font-size:13px;color:#000;transform:scaleX(0.987);transform-origin:100% 0;">147.375.000,00</span></div>
<div class="c" style="left:248px;top:396px;width:123px;"><span class="t" style="left:6.56px;top:4px;font-size:13px;color:#000;transform:scaleX(0.9730);transform-origin:0 0;">Rp</span><span class="t" style="left:25.94px;top:4px;font-size:13px;color:#000;transform:scaleX(0.987);transform-origin:100% 0;">294.750.000,00</span></div>
<div class="c" style="left:248px;top:416px;width:123px;"><span class="t" style="left:6.56px;top:4px;font-size:13px;color:#000;transform:scaleX(0.9730);transform-origin:0 0;">Rp</span><span class="t" style="left:25.94px;top:4px;font-size:13px;color:#000;transform:scaleX(0.987);transform-origin:100% 0;">294.750.000,00</span></div>
<div class="c" style="left:248px;top:436px;width:123px;"><span class="t" style="left:6.56px;top:4px;font-size:13px;color:#000;transform:scaleX(0.9730);transform-origin:0 0;">Rp</span><span class="t" style="left:25.94px;top:4px;font-size:13px;color:#000;transform:scaleX(0.987);transform-origin:100% 0;">343.875.000,00</span></div>
<div class="c" style="left:248px;top:456px;width:123px;"><span class="t" style="left:6.56px;top:4px;font-size:13px;color:#000;transform:scaleX(0.9730);transform-origin:0 0;">Rp</span><span class="t" style="left:25.94px;top:4px;font-size:13px;color:#000;transform:scaleX(0.987);transform-origin:100% 0;">343.875.000,00</span></div>
<div class="c" style="left:248px;top:476px;width:123px;"><span class="t" style="left:6.56px;top:4px;font-size:13px;color:#000;transform:scaleX(0.9730);transform-origin:0 0;">Rp</span><span class="t" style="left:25.94px;top:4px;font-size:13px;color:#000;transform:scaleX(0.987);transform-origin:100% 0;">294.750.000,00</span></div>
<div class="c" style="left:248px;top:496px;width:123px;"><span class="t" style="left:6.56px;top:4px;font-size:13px;color:#000;transform:scaleX(0.9730);transform-origin:0 0;">Rp</span><span class="t" style="left:25.94px;top:4px;font-size:13px;color:#000;transform:scaleX(0.987);transform-origin:100% 0;">294.750.000,00</span></div>
<div class="c" style="left:248px;top:516px;width:123px;"><span class="t" style="left:6.56px;top:4px;font-size:13px;color:#000;transform:scaleX(0.9730);transform-origin:0 0;">Rp</span><span class="t" style="left:25.94px;top:4px;font-size:13px;color:#000;transform:scaleX(0.987);transform-origin:100% 0;">294.750.000,00</span></div>
<div class="c" style="left:248px;top:536px;width:123px;"><span class="t" style="left:6.56px;top:4px;font-size:13px;color:#000;transform:scaleX(0.9730);transform-origin:0 0;">Rp</span><span class="t" style="left:96.62px;top:4px;font-size:13px;color:#000;">-</span></div>
<div class="c" style="left:248px;top:556px;width:123px;"><span class="t" style="left:1.72px;top:4px;font-size:13px;color:#000;transform:scaleX(1.0038);transform-origin:0 0;">-Rp</span><span class="t" style="left:25.94px;top:4px;font-size:13px;color:#000;transform:scaleX(0.987);transform-origin:100% 0;">315.382.500,00</span></div>
<div class="c" style="left:248px;top:576px;width:123px;"><span class="t" style="left:1.72px;top:4px;font-size:13px;color:#000;transform:scaleX(1.0038);transform-origin:0 0;">-Rp</span><span class="t" style="left:25.94px;top:4px;font-size:13px;color:#000;transform:scaleX(0.987);transform-origin:100% 0;">294.750.000,00</span></div>
<div class="c" style="left:248px;top:596px;width:123px;"><span class="t" style="left:1.72px;top:4px;font-size:13px;color:#000;transform:scaleX(1.0038);transform-origin:0 0;">-Rp</span><span class="t" style="left:25.94px;top:4px;font-size:13px;color:#000;transform:scaleX(0.987);transform-origin:100% 0;">736.875.000,00</span></div>
<div class="c" style="left:248px;top:616px;width:123px;"><span class="t" style="left:1.72px;top:4px;font-size:13px;color:#000;transform:scaleX(1.0038);transform-origin:0 0;">-Rp</span><span class="t" style="left:25.94px;top:4px;font-size:13px;color:#000;transform:scaleX(0.987);transform-origin:100% 0;">343.875.000,00</span></div>
<div class="c" style="left:248px;top:636px;width:123px;"><span class="t" style="left:1.72px;top:4px;font-size:13px;color:#000;transform:scaleX(1.0038);transform-origin:0 0;">-Rp</span><span class="t" style="left:25.94px;top:4px;font-size:13px;color:#000;transform:scaleX(0.987);transform-origin:100% 0;">315.382.500,00</span></div>
<div class="c" style="left:248px;top:656px;width:123px;"><span class="t" style="left:1.72px;top:4px;font-size:13px;color:#000;transform:scaleX(1.0038);transform-origin:0 0;">-Rp</span><span class="t" style="left:25.94px;top:4px;font-size:13px;color:#000;transform:scaleX(0.987);transform-origin:100% 0;">736.875.000,00</span></div>
<div class="c" style="left:248px;top:676px;width:123px;"><span class="t" style="left:1.72px;top:4px;font-size:13px;color:#000;transform:scaleX(1.0038);transform-origin:0 0;">-Rp</span><span class="t" style="left:25.94px;top:4px;font-size:13px;color:#000;transform:scaleX(0.987);transform-origin:100% 0;">343.875.000,00</span></div>
<div class="c" style="left:248px;top:696px;width:123px;"><span class="t" style="left:1.72px;top:4px;font-size:13px;color:#000;transform:scaleX(1.0038);transform-origin:0 0;">-Rp</span><span class="t" style="left:25.94px;top:4px;font-size:13px;color:#000;transform:scaleX(0.987);transform-origin:100% 0;">315.382.500,00</span></div>
<div class="c" style="left:248px;top:716px;width:123px;"><span class="t" style="left:1.72px;top:4px;font-size:13px;color:#000;transform:scaleX(1.0038);transform-origin:0 0;">-Rp</span><span class="t" style="left:25.94px;top:4px;font-size:13px;color:#000;transform:scaleX(0.987);transform-origin:100% 0;">343.875.000,00</span></div>
<div class="c" style="left:248px;top:736px;width:123px;"><span class="t" style="left:1.72px;top:4px;font-size:13px;color:#000;transform:scaleX(1.0038);transform-origin:0 0;">-Rp</span><span class="t" style="left:33.17px;top:4px;font-size:13px;color:#000;transform:scaleX(0.987);transform-origin:100% 0;">53.055.000,00</span></div>
<div class="c" style="left:248px;top:756px;width:123px;"><span class="t" style="left:1.72px;top:4px;font-size:13px;color:#000;transform:scaleX(1.0038);transform-origin:0 0;">-Rp</span><span class="t" style="left:25.94px;top:4px;font-size:13px;color:#000;transform:scaleX(0.987);transform-origin:100% 0;">294.750.000,00</span></div>
<div class="c" style="left:248px;top:776px;width:123px;"><span class="t" style="left:1.72px;top:4px;font-size:13px;color:#000;transform:scaleX(1.0038);transform-origin:0 0;">-Rp</span><span class="t" style="left:25.94px;top:4px;font-size:13px;color:#000;transform:scaleX(0.987);transform-origin:100% 0;">294.750.000,00</span></div>
<div class="c" style="left:248px;top:796px;width:123px;"><span class="t" style="left:1.72px;top:4px;font-size:13px;color:#000;transform:scaleX(1.0038);transform-origin:0 0;">-Rp</span><span class="t" style="left:25.94px;top:4px;font-size:13px;color:#000;transform:scaleX(0.987);transform-origin:100% 0;">171.937.500,00</span></div>
<div class="c" style="left:248px;top:816px;width:123px;"><span class="t" style="left:1.72px;top:4px;font-size:13px;color:#000;transform:scaleX(1.0038);transform-origin:0 0;">-Rp</span><span class="t" style="left:33.17px;top:4px;font-size:13px;color:#000;transform:scaleX(0.987);transform-origin:100% 0;">74.670.000,00</span></div>
<div class="c" style="left:248px;top:836px;width:123px;"><span class="t" style="left:1.72px;top:4px;font-size:13px;color:#000;transform:scaleX(1.0038);transform-origin:0 0;">-Rp</span><span class="t" style="left:25.94px;top:4px;font-size:13px;color:#000;transform:scaleX(0.987);transform-origin:100% 0;">294.750.000,00</span></div>
<div class="c" style="left:500px;top:536px;width:63px;"><span class="t" style="left:1.90px;top:4px;font-size:13px;color:#000;transform:scaleX(1.0);transform-origin:0 0;">BPPU_No</span></div>
<div class="c" style="left:564px;top:536px;width:63px;"><span class="t" style="left:1.90px;top:4px;font-size:13px;color:#000;transform:scaleX(1.0);transform-origin:0 0;">Masa_Pajak</span></div>
<div class="c" style="left:628px;top:536px;width:63px;"><span class="t" style="left:1.90px;top:4px;font-size:13px;color:#000;transform:scaleX(1.08);transform-origin:0 0;">Sifat</span></div>
<div class="c" style="left:692px;top:536px;width:63px;"><span class="t" style="left:1.90px;top:4px;font-size:13px;color:#000;transform:scaleX(1.045);transform-origin:0 0;">Status</span></div>
<div class="c" style="left:756px;top:536px;width:63px;"><span class="t" style="left:1.90px;top:4px;font-size:13px;color:#000;transform:scaleX(1.0);transform-origin:0 0;">NPWP_Pem</span></div>
<div class="c" style="left:820px;top:536px;width:63px;"><span class="t" style="left:1.90px;top:4px;font-size:13px;color:#000;transform:scaleX(1.0);transform-origin:0 0;">Nama_Pem</span></div>
<div class="c" style="left:884px;top:536px;width:63px;"><span class="t" style="left:1.90px;top:4px;font-size:13px;color:#000;transform:scaleX(1.0);transform-origin:0 0;">NITKU_Pem</span></div>
<div class="c" style="left:948px;top:536px;width:63px;"><span class="t" style="left:1.90px;top:4px;font-size:13px;color:#000;transform:scaleX(0.975);transform-origin:0 0;">Jenis_Fasil</span></div>
<div class="c" style="left:1012px;top:536px;width:63px;"><span class="t" style="left:1.90px;top:4px;font-size:13px;color:#000;transform:scaleX(0.96);transform-origin:0 0;">Jenis_PPh</span></div>
<div class="c" style="left:1076px;top:536px;width:63px;"><span class="t" style="left:1.90px;top:4px;font-size:13px;color:#000;transform:scaleX(1.075);transform-origin:0 0;">Kode_Obje</span></div>
<div class="c" style="left:1140px;top:536px;width:63px;"><span class="t" style="left:1.90px;top:4px;font-size:13px;color:#000;transform:scaleX(1.02);transform-origin:0 0;">Objek_Paja</span></div>
<div class="c" style="left:1204px;top:536px;width:106px;"><span class="t" style="left:6.90px;top:4px;font-size:13px;color:#000;transform:scaleX(0.966);transform-origin:0 0;">DPP_Rp</span></div>
<div class="c" style="left:1311px;top:536px;width:63px;"><span class="t" style="left:1.90px;top:4px;font-size:13px;color:#000;transform:scaleX(1.022);transform-origin:0 0;">Tarif_%</span></div>
<div class="c" style="left:1375px;top:536px;width:99px;"><span class="t" style="left:6.90px;top:4px;font-size:13px;color:#000;transform:scaleX(0.991);transform-origin:0 0;">PPh_Rp</span></div>
<div class="c" style="left:1582px;top:536px;width:63px;"><span class="t" style="left:1.90px;top:4px;font-size:13px;color:#000;transform:scaleX(1.0);transform-origin:0 0;">Jenis_Dok</span></div>
<div class="c" style="left:1646px;top:536px;width:63px;"><span class="t" style="left:1.90px;top:4px;font-size:13px;color:#000;transform:scaleX(1.0);transform-origin:0 0;">Tanggal_Do</span></div>
<div class="c" style="left:1710px;top:536px;width:63px;"><span class="t" style="left:1.90px;top:4px;font-size:13px;color:#000;transform:scaleX(1.0);transform-origin:0 0;">Nomor_Do</span></div>
<div class="c" style="left:1774px;top:536px;width:63px;"><span class="t" style="left:1.90px;top:4px;font-size:13px;color:#000;transform:scaleX(1.0);transform-origin:0 0;">NPWP_Pen</span></div>
<div class="c" style="left:1838px;top:536px;width:60px;"><span class="t" style="left:1.90px;top:4px;font-size:13px;color:#000;transform:scaleX(1.0);transform-origin:0 0;">NITKU_Pen</span></div>
<div class="c" style="left:436px;top:556px;width:63px;"><span class="t" style="left:53.80px;top:4px;font-size:13px;color:#000;transform:scaleX(0.987);transform-origin:100% 0;">1</span></div>
<div class="c" style="left:500px;top:556px;width:63px;"><span class="t" style="left:1.90px;top:4px;font-size:13px;color:#000;transform:scaleX(0.975);transform-origin:0 0;">2503PWT6Q</span></div>
<div class="c" style="left:564px;top:556px;width:63px;"><span class="t" style="left:1.90px;top:4px;font-size:13px;color:#000;transform:scaleX(0.986);transform-origin:0 0;">07-2025</span></div>
<div class="c" style="left:628px;top:556px;width:63px;"><span class="t" style="left:1.90px;top:4px;font-size:13px;color:#000;transform:scaleX(1.0);transform-origin:0 0;">FINAL</span></div>
<div class="c" style="left:692px;top:556px;width:63px;"><span class="t" style="left:1.90px;top:4px;font-size:13px;color:#000;transform:scaleX(1.005);transform-origin:0 0;">NORMAL</span></div>
<div class="c" style="left:756px;top:556px;width:63px;"><span class="t" style="left:1.90px;top:4px;font-size:13px;color:#000;transform:scaleX(0.987);transform-origin:0 0;">1000000000</span></div>
<svg class="b" style="left:756px;top:556px;" width="7" height="7" viewBox="0 0 7 7"><path d="M0 0 L6 0 L0 6 Z" fill="#1e7a37"/></svg>
<div class="c" style="left:820px;top:556px;width:63px;"><span class="t" style="left:1.90px;top:4px;font-size:13px;color:#000;transform:scaleX(0.939);transform-origin:0 0;">TEKTANA</span></div>
<div class="c" style="left:884px;top:556px;width:63px;"><span class="t" style="left:1.90px;top:4px;font-size:13px;color:#000;transform:scaleX(0.987);transform-origin:0 0;">1000000000</span></div>
<div class="c" style="left:948px;top:556px;width:63px;"><span class="t" style="left:1.90px;top:4px;font-size:13px;color:#000;transform:scaleX(0.966);transform-origin:0 0;">Tanpa Fas</span></div>
<div class="c" style="left:1012px;top:556px;width:63px;"><span class="t" style="left:1.90px;top:4px;font-size:13px;color:#000;transform:scaleX(0.983);transform-origin:0 0;">Pasal 4 Aya</span></div>
<div class="c" style="left:1076px;top:556px;width:63px;"><span class="t" style="left:1.90px;top:4px;font-size:13px;color:#000;transform:scaleX(1.0);transform-origin:0 0;">28-409-22</span></div>
<div class="c" style="left:1140px;top:556px;width:63px;"><span class="t" style="left:1.90px;top:4px;font-size:13px;color:#000;transform:scaleX(1.05);transform-origin:0 0;">Pekerjaan</span></div>
<div class="c" style="left:1204px;top:556px;width:106px;"><span class="t" style="left:8.94px;top:4px;font-size:13px;color:#000;transform:scaleX(0.987);transform-origin:100% 0;">321.000.000,00</span></div>
<div class="c" style="left:1311px;top:556px;width:63px;"><span class="t" style="left:35.86px;top:4px;font-size:13px;color:#000;transform:scaleX(1.027);transform-origin:100% 0;">1,75</span></div>
<div class="c" style="left:1375px;top:556px;width:99px;"><span class="t" style="left:16.40px;top:4px;font-size:13px;color:#000;transform:scaleX(0.987);transform-origin:100% 0;">5.617.500,00</span></div>
<div class="c" style="left:1475px;top:556px;width:106px;"><span class="t" style="left:8.94px;top:4px;font-size:13px;color:#000;transform:scaleX(0.987);transform-origin:100% 0;">315.382.500,00</span></div>
<div class="c" style="left:1582px;top:556px;width:63px;"><span class="t" style="left:1.90px;top:4px;font-size:13px;color:#000;transform:scaleX(1.01);transform-origin:0 0;">Surat Tagi</span></div>
<div class="c" style="left:1646px;top:556px;width:63px;"><span class="t" style="left:1.90px;top:4px;font-size:13px;color:#000;transform:scaleX(1.0);transform-origin:0 0;">14 Juli 2025</span></div>
<div class="c" style="left:1710px;top:556px;width:63px;"><span class="t" style="left:1.90px;top:4px;font-size:13px;color:#000;transform:scaleX(1.02);transform-origin:0 0;">INV001/TIJ</span></div>
<div class="c" style="left:1774px;top:556px;width:63px;"><span class="t" style="left:1.90px;top:4px;font-size:13px;color:#000;transform:scaleX(0.987);transform-origin:0 0;">0716548788</span></div>
<svg class="b" style="left:1774px;top:556px;" width="7" height="7" viewBox="0 0 7 7"><path d="M0 0 L6 0 L0 6 Z" fill="#1e7a37"/></svg>
<div class="c" style="left:1838px;top:556px;width:60px;"><span class="t" style="left:1.90px;top:4px;font-size:13px;color:#000;transform:scaleX(0.987);transform-origin:0 0;">0716548788</span></div>
<div class="c" style="left:436px;top:576px;width:63px;"><span class="t" style="left:53.82px;top:4px;font-size:13px;color:#000;transform:scaleX(0.987);transform-origin:100% 0;">2</span></div>
<div class="c" style="left:500px;top:576px;width:63px;"><span class="t" style="left:1.90px;top:4px;font-size:13px;color:#000;transform:scaleX(0.975);transform-origin:0 0;">2503V0T2H</span></div>
<div class="c" style="left:564px;top:576px;width:63px;"><span class="t" style="left:1.90px;top:4px;font-size:13px;color:#000;transform:scaleX(0.986);transform-origin:0 0;">07-2025</span></div>
<div class="c" style="left:628px;top:576px;width:63px;"><span class="t" style="left:1.90px;top:4px;font-size:13px;color:#000;transform:scaleX(1.0);transform-origin:0 0;">FINAL</span></div>
<div class="c" style="left:692px;top:576px;width:63px;"><span class="t" style="left:1.90px;top:4px;font-size:13px;color:#000;transform:scaleX(1.005);transform-origin:0 0;">NORMAL</span></div>
<div class="c" style="left:756px;top:576px;width:63px;"><span class="t" style="left:1.90px;top:4px;font-size:13px;color:#000;transform:scaleX(0.987);transform-origin:0 0;">1000000000</span></div>
<svg class="b" style="left:756px;top:576px;" width="7" height="7" viewBox="0 0 7 7"><path d="M0 0 L6 0 L0 6 Z" fill="#1e7a37"/></svg>
<div class="c" style="left:820px;top:576px;width:63px;"><span class="t" style="left:1.90px;top:4px;font-size:13px;color:#000;transform:scaleX(0.939);transform-origin:0 0;">TEKTANA</span></div>
<div class="c" style="left:884px;top:576px;width:63px;"><span class="t" style="left:1.90px;top:4px;font-size:13px;color:#000;transform:scaleX(0.987);transform-origin:0 0;">1000000000</span></div>
<div class="c" style="left:948px;top:576px;width:63px;"><span class="t" style="left:1.90px;top:4px;font-size:13px;color:#000;transform:scaleX(0.966);transform-origin:0 0;">Tanpa Fas</span></div>
<div class="c" style="left:1012px;top:576px;width:63px;"><span class="t" style="left:1.90px;top:4px;font-size:13px;color:#000;transform:scaleX(0.983);transform-origin:0 0;">Pasal 4 Aya</span></div>
<div class="c" style="left:1076px;top:576px;width:63px;"><span class="t" style="left:1.90px;top:4px;font-size:13px;color:#000;transform:scaleX(1.0);transform-origin:0 0;">28-409-22</span></div>
<div class="c" style="left:1140px;top:576px;width:63px;"><span class="t" style="left:1.90px;top:4px;font-size:13px;color:#000;transform:scaleX(1.05);transform-origin:0 0;">Pekerjaan</span></div>
<div class="c" style="left:1204px;top:576px;width:106px;"><span class="t" style="left:8.94px;top:4px;font-size:13px;color:#000;transform:scaleX(0.987);transform-origin:100% 0;">300.000.000,00</span></div>
<div class="c" style="left:1311px;top:576px;width:63px;"><span class="t" style="left:35.86px;top:4px;font-size:13px;color:#000;transform:scaleX(1.027);transform-origin:100% 0;">1,75</span></div>
<div class="c" style="left:1375px;top:576px;width:99px;"><span class="t" style="left:16.40px;top:4px;font-size:13px;color:#000;transform:scaleX(0.987);transform-origin:100% 0;">5.250.000,00</span></div>
<div class="c" style="left:1475px;top:576px;width:106px;"><span class="t" style="left:8.94px;top:4px;font-size:13px;color:#000;transform:scaleX(0.987);transform-origin:100% 0;">294.750.000,00</span></div>
<div class="c" style="left:1582px;top:576px;width:63px;"><span class="t" style="left:1.90px;top:4px;font-size:13px;color:#000;transform:scaleX(1.01);transform-origin:0 0;">Surat Tagi</span></div>
<div class="c" style="left:1646px;top:576px;width:63px;"><span class="t" style="left:1.90px;top:4px;font-size:13px;color:#000;transform:scaleX(1.0);transform-origin:0 0;">31 Juli 2025</span></div>
<div class="c" style="left:1710px;top:576px;width:63px;"><span class="t" style="left:1.90px;top:4px;font-size:13px;color:#000;transform:scaleX(1.02);transform-origin:0 0;">004/TIJ/VII</span></div>
<div class="c" style="left:1774px;top:576px;width:63px;"><span class="t" style="left:1.90px;top:4px;font-size:13px;color:#000;transform:scaleX(0.987);transform-origin:0 0;">0019841542</span></div>
<svg class="b" style="left:1774px;top:576px;" width="7" height="7" viewBox="0 0 7 7"><path d="M0 0 L6 0 L0 6 Z" fill="#1e7a37"/></svg>
<div class="c" style="left:1838px;top:576px;width:60px;"><span class="t" style="left:1.90px;top:4px;font-size:13px;color:#000;transform:scaleX(0.987);transform-origin:0 0;">0019841542</span></div>
<div class="c" style="left:436px;top:596px;width:63px;"><span class="t" style="left:53.73px;top:4px;font-size:13px;color:#000;transform:scaleX(0.987);transform-origin:100% 0;">3</span></div>
<div class="c" style="left:500px;top:596px;width:63px;"><span class="t" style="left:1.90px;top:4px;font-size:13px;color:#000;transform:scaleX(0.975);transform-origin:0 0;">2505ISF89</span></div>
<div class="c" style="left:564px;top:596px;width:63px;"><span class="t" style="left:1.90px;top:4px;font-size:13px;color:#000;transform:scaleX(0.986);transform-origin:0 0;">09-2025</span></div>
<div class="c" style="left:628px;top:596px;width:63px;"><span class="t" style="left:1.90px;top:4px;font-size:13px;color:#000;transform:scaleX(1.0);transform-origin:0 0;">FINAL</span></div>
<div class="c" style="left:692px;top:596px;width:63px;"><span class="t" style="left:1.90px;top:4px;font-size:13px;color:#000;transform:scaleX(1.005);transform-origin:0 0;">NORMAL</span></div>
<div class="c" style="left:756px;top:596px;width:63px;"><span class="t" style="left:1.90px;top:4px;font-size:13px;color:#000;transform:scaleX(0.987);transform-origin:0 0;">1000000000</span></div>
<svg class="b" style="left:756px;top:596px;" width="7" height="7" viewBox="0 0 7 7"><path d="M0 0 L6 0 L0 6 Z" fill="#1e7a37"/></svg>
<div class="c" style="left:820px;top:596px;width:63px;"><span class="t" style="left:1.90px;top:4px;font-size:13px;color:#000;transform:scaleX(0.939);transform-origin:0 0;">TEKTANA</span></div>
<div class="c" style="left:884px;top:596px;width:63px;"><span class="t" style="left:1.90px;top:4px;font-size:13px;color:#000;transform:scaleX(0.987);transform-origin:0 0;">1000000000</span></div>
<div class="c" style="left:948px;top:596px;width:63px;"><span class="t" style="left:1.90px;top:4px;font-size:13px;color:#000;transform:scaleX(0.966);transform-origin:0 0;">Tanpa Fas</span></div>
<div class="c" style="left:1012px;top:596px;width:63px;"><span class="t" style="left:1.90px;top:4px;font-size:13px;color:#000;transform:scaleX(0.983);transform-origin:0 0;">Pasal 4 Aya</span></div>
<div class="c" style="left:1076px;top:596px;width:63px;"><span class="t" style="left:1.90px;top:4px;font-size:13px;color:#000;transform:scaleX(1.0);transform-origin:0 0;">28-409-22</span></div>
<div class="c" style="left:1140px;top:596px;width:63px;"><span class="t" style="left:1.90px;top:4px;font-size:13px;color:#000;transform:scaleX(1.05);transform-origin:0 0;">Pekerjaan</span></div>
<div class="c" style="left:1204px;top:596px;width:106px;"><span class="t" style="left:8.94px;top:4px;font-size:13px;color:#000;transform:scaleX(0.987);transform-origin:100% 0;">750.000.000,00</span></div>
<div class="c" style="left:1311px;top:596px;width:63px;"><span class="t" style="left:35.86px;top:4px;font-size:13px;color:#000;transform:scaleX(1.027);transform-origin:100% 0;">1,75</span></div>
<div class="c" style="left:1375px;top:596px;width:99px;"><span class="t" style="left:9.17px;top:4px;font-size:13px;color:#000;transform:scaleX(0.987);transform-origin:100% 0;">13.125.000,00</span></div>
<div class="c" style="left:1475px;top:596px;width:106px;"><span class="t" style="left:8.94px;top:4px;font-size:13px;color:#000;transform:scaleX(0.987);transform-origin:100% 0;">736.875.000,00</span></div>
<div class="c" style="left:1582px;top:596px;width:63px;"><span class="t" style="left:1.90px;top:4px;font-size:13px;color:#000;transform:scaleX(1.01);transform-origin:0 0;">Surat Tagi</span></div>
<div class="c" style="left:1646px;top:596px;width:63px;"><span class="t" style="left:1.90px;top:4px;font-size:13px;color:#000;transform:scaleX(1.04);transform-origin:0 0;">30 September</span></div>
<div class="c" style="left:1710px;top:596px;width:63px;"><span class="t" style="left:1.90px;top:4px;font-size:13px;color:#000;transform:scaleX(1.02);transform-origin:0 0;">008/TIJ/IX/</span></div>
<div class="c" style="left:1774px;top:596px;width:63px;"><span class="t" style="left:1.90px;top:4px;font-size:13px;color:#000;transform:scaleX(0.987);transform-origin:0 0;">0019841542</span></div>
<svg class="b" style="left:1774px;top:596px;" width="7" height="7" viewBox="0 0 7 7"><path d="M0 0 L6 0 L0 6 Z" fill="#1e7a37"/></svg>
<div class="c" style="left:1838px;top:596px;width:60px;"><span class="t" style="left:1.90px;top:4px;font-size:13px;color:#000;transform:scaleX(0.987);transform-origin:0 0;">0019841542</span></div>
<div class="c" style="left:436px;top:616px;width:63px;"><span class="t" style="left:53.55px;top:4px;font-size:13px;color:#000;transform:scaleX(0.987);transform-origin:100% 0;">4</span></div>
<div class="c" style="left:500px;top:616px;width:63px;"><span class="t" style="left:1.90px;top:4px;font-size:13px;color:#000;transform:scaleX(0.975);transform-origin:0 0;">2505ISHD4</span></div>
<div class="c" style="left:564px;top:616px;width:63px;"><span class="t" style="left:1.90px;top:4px;font-size:13px;color:#000;transform:scaleX(0.986);transform-origin:0 0;">09-2025</span></div>
<div class="c" style="left:628px;top:616px;width:63px;"><span class="t" style="left:1.90px;top:4px;font-size:13px;color:#000;transform:scaleX(1.0);transform-origin:0 0;">FINAL</span></div>
<div class="c" style="left:692px;top:616px;width:63px;"><span class="t" style="left:1.90px;top:4px;font-size:13px;color:#000;transform:scaleX(1.005);transform-origin:0 0;">NORMAL</span></div>
<div class="c" style="left:756px;top:616px;width:63px;"><span class="t" style="left:1.90px;top:4px;font-size:13px;color:#000;transform:scaleX(0.987);transform-origin:0 0;">1000000000</span></div>
<svg class="b" style="left:756px;top:616px;" width="7" height="7" viewBox="0 0 7 7"><path d="M0 0 L6 0 L0 6 Z" fill="#1e7a37"/></svg>
<div class="c" style="left:820px;top:616px;width:63px;"><span class="t" style="left:1.90px;top:4px;font-size:13px;color:#000;transform:scaleX(0.939);transform-origin:0 0;">TEKTANA</span></div>
<div class="c" style="left:884px;top:616px;width:63px;"><span class="t" style="left:1.90px;top:4px;font-size:13px;color:#000;transform:scaleX(0.987);transform-origin:0 0;">1000000000</span></div>
<div class="c" style="left:948px;top:616px;width:63px;"><span class="t" style="left:1.90px;top:4px;font-size:13px;color:#000;transform:scaleX(0.966);transform-origin:0 0;">Tanpa Fas</span></div>
<div class="c" style="left:1012px;top:616px;width:63px;"><span class="t" style="left:1.90px;top:4px;font-size:13px;color:#000;transform:scaleX(0.983);transform-origin:0 0;">Pasal 4 Aya</span></div>
<div class="c" style="left:1076px;top:616px;width:63px;"><span class="t" style="left:1.90px;top:4px;font-size:13px;color:#000;transform:scaleX(1.0);transform-origin:0 0;">28-409-22</span></div>
<div class="c" style="left:1140px;top:616px;width:63px;"><span class="t" style="left:1.90px;top:4px;font-size:13px;color:#000;transform:scaleX(1.05);transform-origin:0 0;">Pekerjaan</span></div>
<div class="c" style="left:1204px;top:616px;width:106px;"><span class="t" style="left:8.94px;top:4px;font-size:13px;color:#000;transform:scaleX(0.987);transform-origin:100% 0;">350.000.000,00</span></div>
<div class="c" style="left:1311px;top:616px;width:63px;"><span class="t" style="left:35.86px;top:4px;font-size:13px;color:#000;transform:scaleX(1.027);transform-origin:100% 0;">1,75</span></div>
<div class="c" style="left:1375px;top:616px;width:99px;"><span class="t" style="left:16.40px;top:4px;font-size:13px;color:#000;transform:scaleX(0.987);transform-origin:100% 0;">6.125.000,00</span></div>
<div class="c" style="left:1475px;top:616px;width:106px;"><span class="t" style="left:8.94px;top:4px;font-size:13px;color:#000;transform:scaleX(0.987);transform-origin:100% 0;">343.875.000,00</span></div>
<div class="c" style="left:1582px;top:616px;width:63px;"><span class="t" style="left:1.90px;top:4px;font-size:13px;color:#000;transform:scaleX(1.01);transform-origin:0 0;">Surat Tagi</span></div>
<div class="c" style="left:1646px;top:616px;width:63px;"><span class="t" style="left:1.90px;top:4px;font-size:13px;color:#000;transform:scaleX(1.04);transform-origin:0 0;">30 September</span></div>
<div class="c" style="left:1710px;top:616px;width:63px;"><span class="t" style="left:1.90px;top:4px;font-size:13px;color:#000;transform:scaleX(1.02);transform-origin:0 0;">007/TIJ/IX/</span></div>
<div class="c" style="left:1774px;top:616px;width:63px;"><span class="t" style="left:1.90px;top:4px;font-size:13px;color:#000;transform:scaleX(0.987);transform-origin:0 0;">0019841542</span></div>
<svg class="b" style="left:1774px;top:616px;" width="7" height="7" viewBox="0 0 7 7"><path d="M0 0 L6 0 L0 6 Z" fill="#1e7a37"/></svg>
<div class="c" style="left:1838px;top:616px;width:60px;"><span class="t" style="left:1.90px;top:4px;font-size:13px;color:#000;transform:scaleX(0.987);transform-origin:0 0;">0019841542</span></div>
<div class="c" style="left:436px;top:636px;width:63px;"><span class="t" style="left:53.71px;top:4px;font-size:13px;color:#000;transform:scaleX(0.987);transform-origin:100% 0;">5</span></div>
<div class="c" style="left:500px;top:636px;width:63px;"><span class="t" style="left:1.90px;top:4px;font-size:13px;color:#000;transform:scaleX(0.975);transform-origin:0 0;">250593T1X</span></div>
<div class="c" style="left:564px;top:636px;width:63px;"><span class="t" style="left:1.90px;top:4px;font-size:13px;color:#000;transform:scaleX(0.986);transform-origin:0 0;">09-2025</span></div>
<div class="c" style="left:628px;top:636px;width:63px;"><span class="t" style="left:1.90px;top:4px;font-size:13px;color:#000;transform:scaleX(1.0);transform-origin:0 0;">FINAL</span></div>
<div class="c" style="left:692px;top:636px;width:63px;"><span class="t" style="left:1.90px;top:4px;font-size:13px;color:#000;transform:scaleX(1.005);transform-origin:0 0;">NORMAL</span></div>
<div class="c" style="left:756px;top:636px;width:63px;"><span class="t" style="left:1.90px;top:4px;font-size:13px;color:#000;transform:scaleX(0.987);transform-origin:0 0;">1000000000</span></div>
<svg class="b" style="left:756px;top:636px;" width="7" height="7" viewBox="0 0 7 7"><path d="M0 0 L6 0 L0 6 Z" fill="#1e7a37"/></svg>
<div class="c" style="left:820px;top:636px;width:63px;"><span class="t" style="left:1.90px;top:4px;font-size:13px;color:#000;transform:scaleX(0.939);transform-origin:0 0;">TEKTANA</span></div>
<div class="c" style="left:884px;top:636px;width:63px;"><span class="t" style="left:1.90px;top:4px;font-size:13px;color:#000;transform:scaleX(0.987);transform-origin:0 0;">1000000000</span></div>
<div class="c" style="left:948px;top:636px;width:63px;"><span class="t" style="left:1.90px;top:4px;font-size:13px;color:#000;transform:scaleX(0.966);transform-origin:0 0;">Tanpa Fas</span></div>
<div class="c" style="left:1012px;top:636px;width:63px;"><span class="t" style="left:1.90px;top:4px;font-size:13px;color:#000;transform:scaleX(0.983);transform-origin:0 0;">Pasal 4 Aya</span></div>
<div class="c" style="left:1076px;top:636px;width:63px;"><span class="t" style="left:1.90px;top:4px;font-size:13px;color:#000;transform:scaleX(1.0);transform-origin:0 0;">28-409-22</span></div>
<div class="c" style="left:1140px;top:636px;width:63px;"><span class="t" style="left:1.90px;top:4px;font-size:13px;color:#000;transform:scaleX(1.05);transform-origin:0 0;">Pekerjaan</span></div>
<div class="c" style="left:1204px;top:636px;width:106px;"><span class="t" style="left:8.94px;top:4px;font-size:13px;color:#000;transform:scaleX(0.987);transform-origin:100% 0;">321.000.000,00</span></div>
<div class="c" style="left:1311px;top:636px;width:63px;"><span class="t" style="left:35.86px;top:4px;font-size:13px;color:#000;transform:scaleX(1.027);transform-origin:100% 0;">1,75</span></div>
<div class="c" style="left:1375px;top:636px;width:99px;"><span class="t" style="left:16.40px;top:4px;font-size:13px;color:#000;transform:scaleX(0.987);transform-origin:100% 0;">5.617.500,00</span></div>
<div class="c" style="left:1475px;top:636px;width:106px;"><span class="t" style="left:8.94px;top:4px;font-size:13px;color:#000;transform:scaleX(0.987);transform-origin:100% 0;">315.382.500,00</span></div>
<div class="c" style="left:1582px;top:636px;width:63px;"><span class="t" style="left:1.90px;top:4px;font-size:13px;color:#000;transform:scaleX(1.01);transform-origin:0 0;">Surat Tagi</span></div>
<div class="c" style="left:1646px;top:636px;width:63px;"><span class="t" style="left:1.90px;top:4px;font-size:13px;color:#000;transform:scaleX(1.04);transform-origin:0 0;">14 Agustus 2</span></div>
<div class="c" style="left:1710px;top:636px;width:63px;"><span class="t" style="left:1.90px;top:4px;font-size:13px;color:#000;transform:scaleX(0.965);transform-origin:0 0;">002.TIJ.VIII</span></div>
<div class="c" style="left:1774px;top:636px;width:63px;"><span class="t" style="left:1.90px;top:4px;font-size:13px;color:#000;transform:scaleX(0.987);transform-origin:0 0;">0716548788</span></div>
<svg class="b" style="left:1774px;top:636px;" width="7" height="7" viewBox="0 0 7 7"><path d="M0 0 L6 0 L0 6 Z" fill="#1e7a37"/></svg>
<div class="c" style="left:1838px;top:636px;width:60px;"><span class="t" style="left:1.90px;top:4px;font-size:13px;color:#000;transform:scaleX(0.987);transform-origin:0 0;">0716548788</span></div>
<div class="c" style="left:436px;top:656px;width:63px;"><span class="t" style="left:53.73px;top:4px;font-size:13px;color:#000;transform:scaleX(0.987);transform-origin:100% 0;">6</span></div>
<div class="c" style="left:500px;top:656px;width:63px;"><span class="t" style="left:1.90px;top:4px;font-size:13px;color:#000;transform:scaleX(0.975);transform-origin:0 0;">2505ISF89</span></div>
<div class="c" style="left:564px;top:656px;width:63px;"><span class="t" style="left:1.90px;top:4px;font-size:13px;color:#000;transform:scaleX(0.986);transform-origin:0 0;">09-2025</span></div>
<div class="c" style="left:628px;top:656px;width:63px;"><span class="t" style="left:1.90px;top:4px;font-size:13px;color:#000;transform:scaleX(1.0);transform-origin:0 0;">FINAL</span></div>
<div class="c" style="left:692px;top:656px;width:63px;"><span class="t" style="left:1.90px;top:4px;font-size:13px;color:#000;transform:scaleX(1.005);transform-origin:0 0;">NORMAL</span></div>
<div class="c" style="left:756px;top:656px;width:63px;"><span class="t" style="left:1.90px;top:4px;font-size:13px;color:#000;transform:scaleX(0.987);transform-origin:0 0;">1000000000</span></div>
<svg class="b" style="left:756px;top:656px;" width="7" height="7" viewBox="0 0 7 7"><path d="M0 0 L6 0 L0 6 Z" fill="#1e7a37"/></svg>
<div class="c" style="left:820px;top:656px;width:63px;"><span class="t" style="left:1.90px;top:4px;font-size:13px;color:#000;transform:scaleX(0.939);transform-origin:0 0;">TEKTANA</span></div>
<div class="c" style="left:884px;top:656px;width:63px;"><span class="t" style="left:1.90px;top:4px;font-size:13px;color:#000;transform:scaleX(0.987);transform-origin:0 0;">1000000000</span></div>
<div class="c" style="left:948px;top:656px;width:63px;"><span class="t" style="left:1.90px;top:4px;font-size:13px;color:#000;transform:scaleX(0.966);transform-origin:0 0;">Tanpa Fas</span></div>
<div class="c" style="left:1012px;top:656px;width:63px;"><span class="t" style="left:1.90px;top:4px;font-size:13px;color:#000;transform:scaleX(0.983);transform-origin:0 0;">Pasal 4 Aya</span></div>
<div class="c" style="left:1076px;top:656px;width:63px;"><span class="t" style="left:1.90px;top:4px;font-size:13px;color:#000;transform:scaleX(1.0);transform-origin:0 0;">28-409-22</span></div>
<div class="c" style="left:1140px;top:656px;width:63px;"><span class="t" style="left:1.90px;top:4px;font-size:13px;color:#000;transform:scaleX(1.05);transform-origin:0 0;">Pekerjaan</span></div>
<div class="c" style="left:1204px;top:656px;width:106px;"><span class="t" style="left:8.94px;top:4px;font-size:13px;color:#000;transform:scaleX(0.987);transform-origin:100% 0;">750.000.000,00</span></div>
<div class="c" style="left:1311px;top:656px;width:63px;"><span class="t" style="left:35.86px;top:4px;font-size:13px;color:#000;transform:scaleX(1.027);transform-origin:100% 0;">1,75</span></div>
<div class="c" style="left:1375px;top:656px;width:99px;"><span class="t" style="left:9.17px;top:4px;font-size:13px;color:#000;transform:scaleX(0.987);transform-origin:100% 0;">13.125.000,00</span></div>
<div class="c" style="left:1475px;top:656px;width:106px;"><span class="t" style="left:8.94px;top:4px;font-size:13px;color:#000;transform:scaleX(0.987);transform-origin:100% 0;">736.875.000,00</span></div>
<div class="c" style="left:1582px;top:656px;width:63px;"><span class="t" style="left:1.90px;top:4px;font-size:13px;color:#000;transform:scaleX(1.01);transform-origin:0 0;">Surat Tagi</span></div>
<div class="c" style="left:1646px;top:656px;width:63px;"><span class="t" style="left:1.90px;top:4px;font-size:13px;color:#000;transform:scaleX(1.04);transform-origin:0 0;">30 September</span></div>
<div class="c" style="left:1710px;top:656px;width:63px;"><span class="t" style="left:1.90px;top:4px;font-size:13px;color:#000;transform:scaleX(1.02);transform-origin:0 0;">008/TIJ/IX/</span></div>
<div class="c" style="left:1774px;top:656px;width:63px;"><span class="t" style="left:1.90px;top:4px;font-size:13px;color:#000;transform:scaleX(0.987);transform-origin:0 0;">0019841542</span></div>
<svg class="b" style="left:1774px;top:656px;" width="7" height="7" viewBox="0 0 7 7"><path d="M0 0 L6 0 L0 6 Z" fill="#1e7a37"/></svg>
<div class="c" style="left:1838px;top:656px;width:60px;"><span class="t" style="left:1.90px;top:4px;font-size:13px;color:#000;transform:scaleX(0.987);transform-origin:0 0;">0019841542</span></div>
<div class="c" style="left:436px;top:676px;width:63px;"><span class="t" style="left:53.82px;top:4px;font-size:13px;color:#000;transform:scaleX(0.987);transform-origin:100% 0;">7</span></div>
<div class="c" style="left:500px;top:676px;width:63px;"><span class="t" style="left:1.90px;top:4px;font-size:13px;color:#000;transform:scaleX(0.975);transform-origin:0 0;">2505ISHD4</span></div>
<div class="c" style="left:564px;top:676px;width:63px;"><span class="t" style="left:1.90px;top:4px;font-size:13px;color:#000;transform:scaleX(0.986);transform-origin:0 0;">09-2025</span></div>
<div class="c" style="left:628px;top:676px;width:63px;"><span class="t" style="left:1.90px;top:4px;font-size:13px;color:#000;transform:scaleX(1.0);transform-origin:0 0;">FINAL</span></div>
<div class="c" style="left:692px;top:676px;width:63px;"><span class="t" style="left:1.90px;top:4px;font-size:13px;color:#000;transform:scaleX(1.005);transform-origin:0 0;">NORMAL</span></div>
<div class="c" style="left:756px;top:676px;width:63px;"><span class="t" style="left:1.90px;top:4px;font-size:13px;color:#000;transform:scaleX(0.987);transform-origin:0 0;">1000000000</span></div>
<svg class="b" style="left:756px;top:676px;" width="7" height="7" viewBox="0 0 7 7"><path d="M0 0 L6 0 L0 6 Z" fill="#1e7a37"/></svg>
<div class="c" style="left:820px;top:676px;width:63px;"><span class="t" style="left:1.90px;top:4px;font-size:13px;color:#000;transform:scaleX(0.939);transform-origin:0 0;">TEKTANA</span></div>
<div class="c" style="left:884px;top:676px;width:63px;"><span class="t" style="left:1.90px;top:4px;font-size:13px;color:#000;transform:scaleX(0.987);transform-origin:0 0;">1000000000</span></div>
<div class="c" style="left:948px;top:676px;width:63px;"><span class="t" style="left:1.90px;top:4px;font-size:13px;color:#000;transform:scaleX(0.966);transform-origin:0 0;">Tanpa Fas</span></div>
<div class="c" style="left:1012px;top:676px;width:63px;"><span class="t" style="left:1.90px;top:4px;font-size:13px;color:#000;transform:scaleX(0.983);transform-origin:0 0;">Pasal 4 Aya</span></div>
<div class="c" style="left:1076px;top:676px;width:63px;"><span class="t" style="left:1.90px;top:4px;font-size:13px;color:#000;transform:scaleX(1.0);transform-origin:0 0;">28-409-22</span></div>
<div class="c" style="left:1140px;top:676px;width:63px;"><span class="t" style="left:1.90px;top:4px;font-size:13px;color:#000;transform:scaleX(1.05);transform-origin:0 0;">Pekerjaan</span></div>
<div class="c" style="left:1204px;top:676px;width:106px;"><span class="t" style="left:8.94px;top:4px;font-size:13px;color:#000;transform:scaleX(0.987);transform-origin:100% 0;">350.000.000,00</span></div>
<div class="c" style="left:1311px;top:676px;width:63px;"><span class="t" style="left:35.86px;top:4px;font-size:13px;color:#000;transform:scaleX(1.027);transform-origin:100% 0;">1,75</span></div>
<div class="c" style="left:1375px;top:676px;width:99px;"><span class="t" style="left:16.40px;top:4px;font-size:13px;color:#000;transform:scaleX(0.987);transform-origin:100% 0;">6.125.000,00</span></div>
<div class="c" style="left:1475px;top:676px;width:106px;"><span class="t" style="left:8.94px;top:4px;font-size:13px;color:#000;transform:scaleX(0.987);transform-origin:100% 0;">343.875.000,00</span></div>
<div class="c" style="left:1582px;top:676px;width:63px;"><span class="t" style="left:1.90px;top:4px;font-size:13px;color:#000;transform:scaleX(1.01);transform-origin:0 0;">Surat Tagi</span></div>
<div class="c" style="left:1646px;top:676px;width:63px;"><span class="t" style="left:1.90px;top:4px;font-size:13px;color:#000;transform:scaleX(1.04);transform-origin:0 0;">30 September</span></div>
<div class="c" style="left:1710px;top:676px;width:63px;"><span class="t" style="left:1.90px;top:4px;font-size:13px;color:#000;transform:scaleX(1.02);transform-origin:0 0;">007/TIJ/IX/</span></div>
<div class="c" style="left:1774px;top:676px;width:63px;"><span class="t" style="left:1.90px;top:4px;font-size:13px;color:#000;transform:scaleX(0.987);transform-origin:0 0;">0019841542</span></div>
<svg class="b" style="left:1774px;top:676px;" width="7" height="7" viewBox="0 0 7 7"><path d="M0 0 L6 0 L0 6 Z" fill="#1e7a37"/></svg>
<div class="c" style="left:1838px;top:676px;width:60px;"><span class="t" style="left:1.90px;top:4px;font-size:13px;color:#000;transform:scaleX(0.987);transform-origin:0 0;">0019841542</span></div>
<div class="c" style="left:436px;top:696px;width:63px;"><span class="t" style="left:53.73px;top:4px;font-size:13px;color:#000;transform:scaleX(0.987);transform-origin:100% 0;">8</span></div>
<div class="c" style="left:500px;top:696px;width:63px;"><span class="t" style="left:1.90px;top:4px;font-size:13px;color:#000;transform:scaleX(0.975);transform-origin:0 0;">250593XDB</span></div>
<div class="c" style="left:564px;top:696px;width:63px;"><span class="t" style="left:1.90px;top:4px;font-size:13px;color:#000;transform:scaleX(0.986);transform-origin:0 0;">09-2025</span></div>
<div class="c" style="left:628px;top:696px;width:63px;"><span class="t" style="left:1.90px;top:4px;font-size:13px;color:#000;transform:scaleX(1.0);transform-origin:0 0;">FINAL</span></div>
<div class="c" style="left:692px;top:696px;width:63px;"><span class="t" style="left:1.90px;top:4px;font-size:13px;color:#000;transform:scaleX(1.005);transform-origin:0 0;">NORMAL</span></div>
<div class="c" style="left:756px;top:696px;width:63px;"><span class="t" style="left:1.90px;top:4px;font-size:13px;color:#000;transform:scaleX(0.987);transform-origin:0 0;">1000000000</span></div>
<svg class="b" style="left:756px;top:696px;" width="7" height="7" viewBox="0 0 7 7"><path d="M0 0 L6 0 L0 6 Z" fill="#1e7a37"/></svg>
<div class="c" style="left:820px;top:696px;width:63px;"><span class="t" style="left:1.90px;top:4px;font-size:13px;color:#000;transform:scaleX(0.939);transform-origin:0 0;">TEKTANA</span></div>
<div class="c" style="left:884px;top:696px;width:63px;"><span class="t" style="left:1.90px;top:4px;font-size:13px;color:#000;transform:scaleX(0.987);transform-origin:0 0;">1000000000</span></div>
<div class="c" style="left:948px;top:696px;width:63px;"><span class="t" style="left:1.90px;top:4px;font-size:13px;color:#000;transform:scaleX(0.966);transform-origin:0 0;">Tanpa Fas</span></div>
<div class="c" style="left:1012px;top:696px;width:63px;"><span class="t" style="left:1.90px;top:4px;font-size:13px;color:#000;transform:scaleX(0.983);transform-origin:0 0;">Pasal 4 Aya</span></div>
<div class="c" style="left:1076px;top:696px;width:63px;"><span class="t" style="left:1.90px;top:4px;font-size:13px;color:#000;transform:scaleX(1.0);transform-origin:0 0;">28-409-22</span></div>
<div class="c" style="left:1140px;top:696px;width:63px;"><span class="t" style="left:1.90px;top:4px;font-size:13px;color:#000;transform:scaleX(1.05);transform-origin:0 0;">Pekerjaan</span></div>
<div class="c" style="left:1204px;top:696px;width:106px;"><span class="t" style="left:8.94px;top:4px;font-size:13px;color:#000;transform:scaleX(0.987);transform-origin:100% 0;">321.000.000,00</span></div>
<div class="c" style="left:1311px;top:696px;width:63px;"><span class="t" style="left:35.86px;top:4px;font-size:13px;color:#000;transform:scaleX(1.027);transform-origin:100% 0;">1,75</span></div>
<div class="c" style="left:1375px;top:696px;width:99px;"><span class="t" style="left:16.40px;top:4px;font-size:13px;color:#000;transform:scaleX(0.987);transform-origin:100% 0;">5.617.500,00</span></div>
<div class="c" style="left:1475px;top:696px;width:106px;"><span class="t" style="left:8.94px;top:4px;font-size:13px;color:#000;transform:scaleX(0.987);transform-origin:100% 0;">315.382.500,00</span></div>
<div class="c" style="left:1582px;top:696px;width:63px;"><span class="t" style="left:1.90px;top:4px;font-size:13px;color:#000;transform:scaleX(1.01);transform-origin:0 0;">Surat Tagi</span></div>
<div class="c" style="left:1646px;top:696px;width:63px;"><span class="t" style="left:1.90px;top:4px;font-size:13px;color:#000;transform:scaleX(1.04);transform-origin:0 0;">13 Agustus 2</span></div>
<div class="c" style="left:1710px;top:696px;width:63px;"><span class="t" style="left:1.90px;top:4px;font-size:13px;color:#000;transform:scaleX(0.965);transform-origin:0 0;">003.TIJ.IX.2</span></div>
<div class="c" style="left:1774px;top:696px;width:63px;"><span class="t" style="left:1.90px;top:4px;font-size:13px;color:#000;transform:scaleX(0.987);transform-origin:0 0;">0716548788</span></div>
<svg class="b" style="left:1774px;top:696px;" width="7" height="7" viewBox="0 0 7 7"><path d="M0 0 L6 0 L0 6 Z" fill="#1e7a37"/></svg>
<div class="c" style="left:1838px;top:696px;width:60px;"><span class="t" style="left:1.90px;top:4px;font-size:13px;color:#000;transform:scaleX(0.987);transform-origin:0 0;">0716548788</span></div>
<div class="c" style="left:436px;top:716px;width:63px;"><span class="t" style="left:53.78px;top:4px;font-size:13px;color:#000;transform:scaleX(0.987);transform-origin:100% 0;">9</span></div>
<div class="c" style="left:500px;top:716px;width:63px;"><span class="t" style="left:1.90px;top:4px;font-size:13px;color:#000;transform:scaleX(0.975);transform-origin:0 0;">2506ANHF8</span></div>
<div class="c" style="left:564px;top:716px;width:63px;"><span class="t" style="left:1.90px;top:4px;font-size:13px;color:#000;transform:scaleX(0.986);transform-origin:0 0;">10-2025</span></div>
<div class="c" style="left:628px;top:716px;width:63px;"><span class="t" style="left:1.90px;top:4px;font-size:13px;color:#000;transform:scaleX(1.0);transform-origin:0 0;">FINAL</span></div>
<div class="c" style="left:692px;top:716px;width:63px;"><span class="t" style="left:1.90px;top:4px;font-size:13px;color:#000;transform:scaleX(1.005);transform-origin:0 0;">NORMAL</span></div>
<div class="c" style="left:756px;top:716px;width:63px;"><span class="t" style="left:1.90px;top:4px;font-size:13px;color:#000;transform:scaleX(0.987);transform-origin:0 0;">1000000000</span></div>
<svg class="b" style="left:756px;top:716px;" width="7" height="7" viewBox="0 0 7 7"><path d="M0 0 L6 0 L0 6 Z" fill="#1e7a37"/></svg>
<div class="c" style="left:820px;top:716px;width:63px;"><span class="t" style="left:1.90px;top:4px;font-size:13px;color:#000;transform:scaleX(0.939);transform-origin:0 0;">TEKTANA</span></div>
<div class="c" style="left:884px;top:716px;width:63px;"><span class="t" style="left:1.90px;top:4px;font-size:13px;color:#000;transform:scaleX(0.987);transform-origin:0 0;">1000000000</span></div>
<div class="c" style="left:948px;top:716px;width:63px;"><span class="t" style="left:1.90px;top:4px;font-size:13px;color:#000;transform:scaleX(0.966);transform-origin:0 0;">Tanpa Fas</span></div>
<div class="c" style="left:1012px;top:716px;width:63px;"><span class="t" style="left:1.90px;top:4px;font-size:13px;color:#000;transform:scaleX(0.983);transform-origin:0 0;">Pasal 4 Aya</span></div>
<div class="c" style="left:1076px;top:716px;width:63px;"><span class="t" style="left:1.90px;top:4px;font-size:13px;color:#000;transform:scaleX(1.0);transform-origin:0 0;">28-409-22</span></div>
<div class="c" style="left:1140px;top:716px;width:63px;"><span class="t" style="left:1.90px;top:4px;font-size:13px;color:#000;transform:scaleX(1.05);transform-origin:0 0;">Pekerjaan</span></div>
<div class="c" style="left:1204px;top:716px;width:106px;"><span class="t" style="left:8.94px;top:4px;font-size:13px;color:#000;transform:scaleX(0.987);transform-origin:100% 0;">350.000.000,00</span></div>
<div class="c" style="left:1311px;top:716px;width:63px;"><span class="t" style="left:35.86px;top:4px;font-size:13px;color:#000;transform:scaleX(1.027);transform-origin:100% 0;">1,75</span></div>
<div class="c" style="left:1375px;top:716px;width:99px;"><span class="t" style="left:16.40px;top:4px;font-size:13px;color:#000;transform:scaleX(0.987);transform-origin:100% 0;">6.125.000,00</span></div>
<div class="c" style="left:1475px;top:716px;width:106px;"><span class="t" style="left:8.94px;top:4px;font-size:13px;color:#000;transform:scaleX(0.987);transform-origin:100% 0;">343.875.000,00</span></div>
<div class="c" style="left:1582px;top:716px;width:63px;"><span class="t" style="left:1.90px;top:4px;font-size:13px;color:#000;transform:scaleX(1.01);transform-origin:0 0;">Surat Tagi</span></div>
<div class="c" style="left:1646px;top:716px;width:63px;"><span class="t" style="left:1.90px;top:4px;font-size:13px;color:#000;transform:scaleX(1.04);transform-origin:0 0;">31 Oktober 2</span></div>
<div class="c" style="left:1710px;top:716px;width:63px;"><span class="t" style="left:1.90px;top:4px;font-size:13px;color:#000;transform:scaleX(1.02);transform-origin:0 0;">009/TIJ/X/2</span></div>
<div class="c" style="left:1774px;top:716px;width:63px;"><span class="t" style="left:1.90px;top:4px;font-size:13px;color:#000;transform:scaleX(0.987);transform-origin:0 0;">0019841542</span></div>
<svg class="b" style="left:1774px;top:716px;" width="7" height="7" viewBox="0 0 7 7"><path d="M0 0 L6 0 L0 6 Z" fill="#1e7a37"/></svg>
<div class="c" style="left:1838px;top:716px;width:60px;"><span class="t" style="left:1.90px;top:4px;font-size:13px;color:#000;transform:scaleX(0.987);transform-origin:0 0;">0019841542</span></div>
<div class="c" style="left:436px;top:736px;width:63px;"><span class="t" style="left:46.44px;top:4px;font-size:13px;color:#000;transform:scaleX(0.987);transform-origin:100% 0;">10</span></div>
<div class="c" style="left:500px;top:736px;width:63px;"><span class="t" style="left:1.90px;top:4px;font-size:13px;color:#000;transform:scaleX(0.975);transform-origin:0 0;">2506U67E4</span></div>
<div class="c" style="left:564px;top:736px;width:63px;"><span class="t" style="left:1.90px;top:4px;font-size:13px;color:#000;transform:scaleX(0.986);transform-origin:0 0;">11-2025</span></div>
<div class="c" style="left:628px;top:736px;width:63px;"><span class="t" style="left:1.90px;top:4px;font-size:13px;color:#000;transform:scaleX(1.0);transform-origin:0 0;">FINAL</span></div>
<div class="c" style="left:692px;top:736px;width:63px;"><span class="t" style="left:1.90px;top:4px;font-size:13px;color:#000;transform:scaleX(1.005);transform-origin:0 0;">NORMAL</span></div>
<div class="c" style="left:756px;top:736px;width:63px;"><span class="t" style="left:1.90px;top:4px;font-size:13px;color:#000;transform:scaleX(0.987);transform-origin:0 0;">1000000000</span></div>
<svg class="b" style="left:756px;top:736px;" width="7" height="7" viewBox="0 0 7 7"><path d="M0 0 L6 0 L0 6 Z" fill="#1e7a37"/></svg>
<div class="c" style="left:820px;top:736px;width:63px;"><span class="t" style="left:1.90px;top:4px;font-size:13px;color:#000;transform:scaleX(0.939);transform-origin:0 0;">TEKTANA</span></div>
<div class="c" style="left:884px;top:736px;width:63px;"><span class="t" style="left:1.90px;top:4px;font-size:13px;color:#000;transform:scaleX(0.987);transform-origin:0 0;">1000000000</span></div>
<div class="c" style="left:948px;top:736px;width:63px;"><span class="t" style="left:1.90px;top:4px;font-size:13px;color:#000;transform:scaleX(0.966);transform-origin:0 0;">Tanpa Fas</span></div>
<div class="c" style="left:1012px;top:736px;width:63px;"><span class="t" style="left:1.90px;top:4px;font-size:13px;color:#000;transform:scaleX(0.983);transform-origin:0 0;">Pasal 4 Aya</span></div>
<div class="c" style="left:1076px;top:736px;width:63px;"><span class="t" style="left:1.90px;top:4px;font-size:13px;color:#000;transform:scaleX(1.0);transform-origin:0 0;">28-409-22</span></div>
<div class="c" style="left:1140px;top:736px;width:63px;"><span class="t" style="left:1.90px;top:4px;font-size:13px;color:#000;transform:scaleX(1.05);transform-origin:0 0;">Pekerjaan</span></div>
<div class="c" style="left:1204px;top:736px;width:106px;"><span class="t" style="left:16.17px;top:4px;font-size:13px;color:#000;transform:scaleX(0.987);transform-origin:100% 0;">54.000.000,00</span></div>
<div class="c" style="left:1311px;top:736px;width:63px;"><span class="t" style="left:35.86px;top:4px;font-size:13px;color:#000;transform:scaleX(1.027);transform-origin:100% 0;">1,75</span></div>
<div class="c" style="left:1375px;top:736px;width:99px;"><span class="t" style="left:27.24px;top:4px;font-size:13px;color:#000;transform:scaleX(0.987);transform-origin:100% 0;">945.000,00</span></div>
<div class="c" style="left:1475px;top:736px;width:106px;"><span class="t" style="left:16.17px;top:4px;font-size:13px;color:#000;transform:scaleX(0.987);transform-origin:100% 0;">53.055.000,00</span></div>
<div class="c" style="left:1582px;top:736px;width:63px;"><span class="t" style="left:1.90px;top:4px;font-size:13px;color:#000;transform:scaleX(1.01);transform-origin:0 0;">Surat Tagi</span></div>
<div class="c" style="left:1646px;top:736px;width:63px;"><span class="t" style="left:1.90px;top:4px;font-size:13px;color:#000;transform:scaleX(1.04);transform-origin:0 0;">12 November</span></div>
<div class="c" style="left:1710px;top:736px;width:63px;"><span class="t" style="left:1.90px;top:4px;font-size:13px;color:#000;transform:scaleX(0.965);transform-origin:0 0;">012.TIJ.XI.2</span></div>
<div class="c" style="left:1774px;top:736px;width:63px;"><span class="t" style="left:1.90px;top:4px;font-size:13px;color:#000;transform:scaleX(0.987);transform-origin:0 0;">0716548788</span></div>
<svg class="b" style="left:1774px;top:736px;" width="7" height="7" viewBox="0 0 7 7"><path d="M0 0 L6 0 L0 6 Z" fill="#1e7a37"/></svg>
<div class="c" style="left:1838px;top:736px;width:60px;"><span class="t" style="left:1.90px;top:4px;font-size:13px;color:#000;transform:scaleX(0.987);transform-origin:0 0;">0716548788</span></div>
<div class="c" style="left:436px;top:756px;width:63px;"><span class="t" style="left:46.57px;top:4px;font-size:13px;color:#000;transform:scaleX(0.987);transform-origin:100% 0;">11</span></div>
<div class="c" style="left:500px;top:756px;width:63px;"><span class="t" style="left:1.90px;top:4px;font-size:13px;color:#000;transform:scaleX(0.975);transform-origin:0 0;">25074FDB2</span></div>
<div class="c" style="left:564px;top:756px;width:63px;"><span class="t" style="left:1.90px;top:4px;font-size:13px;color:#000;transform:scaleX(0.986);transform-origin:0 0;">11-2025</span></div>
<div class="c" style="left:628px;top:756px;width:63px;"><span class="t" style="left:1.90px;top:4px;font-size:13px;color:#000;transform:scaleX(1.0);transform-origin:0 0;">FINAL</span></div>
<div class="c" style="left:692px;top:756px;width:63px;"><span class="t" style="left:1.90px;top:4px;font-size:13px;color:#000;transform:scaleX(1.005);transform-origin:0 0;">NORMAL</span></div>
<div class="c" style="left:756px;top:756px;width:63px;"><span class="t" style="left:1.90px;top:4px;font-size:13px;color:#000;transform:scaleX(0.987);transform-origin:0 0;">1000000000</span></div>
<svg class="b" style="left:756px;top:756px;" width="7" height="7" viewBox="0 0 7 7"><path d="M0 0 L6 0 L0 6 Z" fill="#1e7a37"/></svg>
<div class="c" style="left:820px;top:756px;width:63px;"><span class="t" style="left:1.90px;top:4px;font-size:13px;color:#000;transform:scaleX(0.939);transform-origin:0 0;">TEKTANA</span></div>
<div class="c" style="left:884px;top:756px;width:63px;"><span class="t" style="left:1.90px;top:4px;font-size:13px;color:#000;transform:scaleX(0.987);transform-origin:0 0;">1000000000</span></div>
<div class="c" style="left:948px;top:756px;width:63px;"><span class="t" style="left:1.90px;top:4px;font-size:13px;color:#000;transform:scaleX(0.966);transform-origin:0 0;">Tanpa Fas</span></div>
<div class="c" style="left:1012px;top:756px;width:63px;"><span class="t" style="left:1.90px;top:4px;font-size:13px;color:#000;transform:scaleX(0.983);transform-origin:0 0;">Pasal 4 Aya</span></div>
<div class="c" style="left:1076px;top:756px;width:63px;"><span class="t" style="left:1.90px;top:4px;font-size:13px;color:#000;transform:scaleX(1.0);transform-origin:0 0;">28-409-22</span></div>
<div class="c" style="left:1140px;top:756px;width:63px;"><span class="t" style="left:1.90px;top:4px;font-size:13px;color:#000;transform:scaleX(1.05);transform-origin:0 0;">Pekerjaan</span></div>
<div class="c" style="left:1204px;top:756px;width:106px;"><span class="t" style="left:8.94px;top:4px;font-size:13px;color:#000;transform:scaleX(0.987);transform-origin:100% 0;">300.000.000,00</span></div>
<div class="c" style="left:1311px;top:756px;width:63px;"><span class="t" style="left:35.86px;top:4px;font-size:13px;color:#000;transform:scaleX(1.027);transform-origin:100% 0;">1,75</span></div>
<div class="c" style="left:1375px;top:756px;width:99px;"><span class="t" style="left:16.40px;top:4px;font-size:13px;color:#000;transform:scaleX(0.987);transform-origin:100% 0;">5.250.000,00</span></div>
<div class="c" style="left:1475px;top:756px;width:106px;"><span class="t" style="left:8.94px;top:4px;font-size:13px;color:#000;transform:scaleX(0.987);transform-origin:100% 0;">294.750.000,00</span></div>
<div class="c" style="left:1582px;top:756px;width:63px;"><span class="t" style="left:1.90px;top:4px;font-size:13px;color:#000;transform:scaleX(1.01);transform-origin:0 0;">Surat Tagi</span></div>
<div class="c" style="left:1646px;top:756px;width:63px;"><span class="t" style="left:1.90px;top:4px;font-size:13px;color:#000;transform:scaleX(1.04);transform-origin:0 0;">28 November</span></div>
<div class="c" style="left:1710px;top:756px;width:63px;"><span class="t" style="left:1.90px;top:4px;font-size:13px;color:#000;transform:scaleX(1.02);transform-origin:0 0;">011/TIJ/XI/</span></div>
<div class="c" style="left:1774px;top:756px;width:63px;"><span class="t" style="left:1.90px;top:4px;font-size:13px;color:#000;transform:scaleX(0.987);transform-origin:0 0;">0019841542</span></div>
<svg class="b" style="left:1774px;top:756px;" width="7" height="7" viewBox="0 0 7 7"><path d="M0 0 L6 0 L0 6 Z" fill="#1e7a37"/></svg>
<div class="c" style="left:1838px;top:756px;width:60px;"><span class="t" style="left:1.90px;top:4px;font-size:13px;color:#000;transform:scaleX(0.987);transform-origin:0 0;">0019841542</span></div>
<div class="c" style="left:436px;top:776px;width:63px;"><span class="t" style="left:46.59px;top:4px;font-size:13px;color:#000;transform:scaleX(0.987);transform-origin:100% 0;">12</span></div>
<div class="c" style="left:500px;top:776px;width:63px;"><span class="t" style="left:1.90px;top:4px;font-size:13px;color:#000;transform:scaleX(0.975);transform-origin:0 0;">25074FHX5</span></div>
<div class="c" style="left:564px;top:776px;width:63px;"><span class="t" style="left:1.90px;top:4px;font-size:13px;color:#000;transform:scaleX(0.986);transform-origin:0 0;">11-2025</span></div>
<div class="c" style="left:628px;top:776px;width:63px;"><span class="t" style="left:1.90px;top:4px;font-size:13px;color:#000;transform:scaleX(1.0);transform-origin:0 0;">FINAL</span></div>
<div class="c" style="left:692px;top:776px;width:63px;"><span class="t" style="left:1.90px;top:4px;font-size:13px;color:#000;transform:scaleX(1.005);transform-origin:0 0;">NORMAL</span></div>
<div class="c" style="left:756px;top:776px;width:63px;"><span class="t" style="left:1.90px;top:4px;font-size:13px;color:#000;transform:scaleX(0.987);transform-origin:0 0;">1000000000</span></div>
<svg class="b" style="left:756px;top:776px;" width="7" height="7" viewBox="0 0 7 7"><path d="M0 0 L6 0 L0 6 Z" fill="#1e7a37"/></svg>
<div class="c" style="left:820px;top:776px;width:63px;"><span class="t" style="left:1.90px;top:4px;font-size:13px;color:#000;transform:scaleX(0.939);transform-origin:0 0;">TEKTANA</span></div>
<div class="c" style="left:884px;top:776px;width:63px;"><span class="t" style="left:1.90px;top:4px;font-size:13px;color:#000;transform:scaleX(0.987);transform-origin:0 0;">1000000000</span></div>
<div class="c" style="left:948px;top:776px;width:63px;"><span class="t" style="left:1.90px;top:4px;font-size:13px;color:#000;transform:scaleX(0.966);transform-origin:0 0;">Tanpa Fas</span></div>
<div class="c" style="left:1012px;top:776px;width:63px;"><span class="t" style="left:1.90px;top:4px;font-size:13px;color:#000;transform:scaleX(0.983);transform-origin:0 0;">Pasal 4 Aya</span></div>
<div class="c" style="left:1076px;top:776px;width:63px;"><span class="t" style="left:1.90px;top:4px;font-size:13px;color:#000;transform:scaleX(1.0);transform-origin:0 0;">28-409-22</span></div>
<div class="c" style="left:1140px;top:776px;width:63px;"><span class="t" style="left:1.90px;top:4px;font-size:13px;color:#000;transform:scaleX(1.05);transform-origin:0 0;">Pekerjaan</span></div>
<div class="c" style="left:1204px;top:776px;width:106px;"><span class="t" style="left:8.94px;top:4px;font-size:13px;color:#000;transform:scaleX(0.987);transform-origin:100% 0;">300.000.000,00</span></div>
<div class="c" style="left:1311px;top:776px;width:63px;"><span class="t" style="left:35.86px;top:4px;font-size:13px;color:#000;transform:scaleX(1.027);transform-origin:100% 0;">1,75</span></div>
<div class="c" style="left:1375px;top:776px;width:99px;"><span class="t" style="left:16.40px;top:4px;font-size:13px;color:#000;transform:scaleX(0.987);transform-origin:100% 0;">5.250.000,00</span></div>
<div class="c" style="left:1475px;top:776px;width:106px;"><span class="t" style="left:8.94px;top:4px;font-size:13px;color:#000;transform:scaleX(0.987);transform-origin:100% 0;">294.750.000,00</span></div>
<div class="c" style="left:1582px;top:776px;width:63px;"><span class="t" style="left:1.90px;top:4px;font-size:13px;color:#000;transform:scaleX(1.01);transform-origin:0 0;">Surat Tagi</span></div>
<div class="c" style="left:1646px;top:776px;width:63px;"><span class="t" style="left:1.90px;top:4px;font-size:13px;color:#000;transform:scaleX(1.04);transform-origin:0 0;">28 November</span></div>
<div class="c" style="left:1710px;top:776px;width:63px;"><span class="t" style="left:1.90px;top:4px;font-size:13px;color:#000;transform:scaleX(1.02);transform-origin:0 0;">010/TIJ/X/2</span></div>
<div class="c" style="left:1774px;top:776px;width:63px;"><span class="t" style="left:1.90px;top:4px;font-size:13px;color:#000;transform:scaleX(0.987);transform-origin:0 0;">0019841542</span></div>
<svg class="b" style="left:1774px;top:776px;" width="7" height="7" viewBox="0 0 7 7"><path d="M0 0 L6 0 L0 6 Z" fill="#1e7a37"/></svg>
<div class="c" style="left:1838px;top:776px;width:60px;"><span class="t" style="left:1.90px;top:4px;font-size:13px;color:#000;transform:scaleX(0.987);transform-origin:0 0;">0019841542</span></div>
<div class="c" style="left:436px;top:796px;width:63px;"><span class="t" style="left:46.50px;top:4px;font-size:13px;color:#000;transform:scaleX(0.987);transform-origin:100% 0;">13</span></div>
<div class="c" style="left:500px;top:796px;width:63px;"><span class="t" style="left:1.90px;top:4px;font-size:13px;color:#000;transform:scaleX(0.975);transform-origin:0 0;">2507GIDG9</span></div>
<div class="c" style="left:564px;top:796px;width:63px;"><span class="t" style="left:1.90px;top:4px;font-size:13px;color:#000;transform:scaleX(0.986);transform-origin:0 0;">11-2025</span></div>
<div class="c" style="left:628px;top:796px;width:63px;"><span class="t" style="left:1.90px;top:4px;font-size:13px;color:#000;transform:scaleX(1.0);transform-origin:0 0;">FINAL</span></div>
<div class="c" style="left:692px;top:796px;width:63px;"><span class="t" style="left:1.90px;top:4px;font-size:13px;color:#000;transform:scaleX(1.005);transform-origin:0 0;">NORMAL</span></div>
<div class="c" style="left:756px;top:796px;width:63px;"><span class="t" style="left:1.90px;top:4px;font-size:13px;color:#000;transform:scaleX(0.987);transform-origin:0 0;">1000000000</span></div>
<svg class="b" style="left:756px;top:796px;" width="7" height="7" viewBox="0 0 7 7"><path d="M0 0 L6 0 L0 6 Z" fill="#1e7a37"/></svg>
<div class="c" style="left:820px;top:796px;width:63px;"><span class="t" style="left:1.90px;top:4px;font-size:13px;color:#000;transform:scaleX(0.939);transform-origin:0 0;">TEKTANA T</span></div>
<div class="c" style="left:884px;top:796px;width:63px;"><span class="t" style="left:1.90px;top:4px;font-size:13px;color:#000;transform:scaleX(0.987);transform-origin:0 0;">1000000000</span></div>
<div class="c" style="left:948px;top:796px;width:63px;"><span class="t" style="left:1.90px;top:4px;font-size:13px;color:#000;transform:scaleX(0.966);transform-origin:0 0;">Tanpa Fas</span></div>
<div class="c" style="left:1012px;top:796px;width:63px;"><span class="t" style="left:1.90px;top:4px;font-size:13px;color:#000;transform:scaleX(0.983);transform-origin:0 0;">Pasal 4 Aya</span></div>
<div class="c" style="left:1076px;top:796px;width:63px;"><span class="t" style="left:1.90px;top:4px;font-size:13px;color:#000;transform:scaleX(1.0);transform-origin:0 0;">28-409-22</span></div>
<div class="c" style="left:1140px;top:796px;width:63px;"><span class="t" style="left:1.90px;top:4px;font-size:13px;color:#000;transform:scaleX(1.05);transform-origin:0 0;">Pekerjaan</span></div>
<div class="c" style="left:1204px;top:796px;width:106px;"><span class="t" style="left:8.94px;top:4px;font-size:13px;color:#000;transform:scaleX(0.987);transform-origin:100% 0;">175.000.000,00</span></div>
<div class="c" style="left:1311px;top:796px;width:63px;"><span class="t" style="left:35.86px;top:4px;font-size:13px;color:#000;transform:scaleX(1.027);transform-origin:100% 0;">1,75</span></div>
<div class="c" style="left:1375px;top:796px;width:99px;"><span class="t" style="left:16.40px;top:4px;font-size:13px;color:#000;transform:scaleX(0.987);transform-origin:100% 0;">3.062.500,00</span></div>
<div class="c" style="left:1475px;top:796px;width:106px;"><span class="t" style="left:8.94px;top:4px;font-size:13px;color:#000;transform:scaleX(0.987);transform-origin:100% 0;">171.937.500,00</span></div>
<div class="c" style="left:1582px;top:796px;width:63px;"><span class="t" style="left:1.90px;top:4px;font-size:13px;color:#000;transform:scaleX(1.01);transform-origin:0 0;">Surat Tagi</span></div>
<div class="c" style="left:1646px;top:796px;width:63px;"><span class="t" style="left:1.90px;top:4px;font-size:13px;color:#000;transform:scaleX(1.04);transform-origin:0 0;">07 November</span></div>
<div class="c" style="left:1710px;top:796px;width:63px;"><span class="t" style="left:1.90px;top:4px;font-size:13px;color:#000;transform:scaleX(1.02);transform-origin:0 0;">011/TTJ/XI</span></div>
<div class="c" style="left:1774px;top:796px;width:63px;"><span class="t" style="left:1.90px;top:4px;font-size:13px;color:#000;transform:scaleX(0.987);transform-origin:0 0;">0828773768</span></div>
<svg class="b" style="left:1774px;top:796px;" width="7" height="7" viewBox="0 0 7 7"><path d="M0 0 L6 0 L0 6 Z" fill="#1e7a37"/></svg>
<div class="c" style="left:1838px;top:796px;width:60px;"><span class="t" style="left:1.90px;top:4px;font-size:13px;color:#000;transform:scaleX(0.987);transform-origin:0 0;">0828773768</span></div>
<div class="c" style="left:436px;top:816px;width:63px;"><span class="t" style="left:46.32px;top:4px;font-size:13px;color:#000;transform:scaleX(0.987);transform-origin:100% 0;">14</span></div>
<div class="c" style="left:500px;top:816px;width:63px;"><span class="t" style="left:1.90px;top:4px;font-size:13px;color:#000;transform:scaleX(0.975);transform-origin:0 0;">2507S60LL</span></div>
<div class="c" style="left:564px;top:816px;width:63px;"><span class="t" style="left:1.90px;top:4px;font-size:13px;color:#000;transform:scaleX(0.986);transform-origin:0 0;">12-2025</span></div>
<div class="c" style="left:628px;top:816px;width:63px;"><span class="t" style="left:1.90px;top:4px;font-size:13px;color:#000;transform:scaleX(1.0);transform-origin:0 0;">FINAL</span></div>
<div class="c" style="left:692px;top:816px;width:63px;"><span class="t" style="left:1.90px;top:4px;font-size:13px;color:#000;transform:scaleX(1.005);transform-origin:0 0;">NORMAL</span></div>
<div class="c" style="left:756px;top:816px;width:63px;"><span class="t" style="left:1.90px;top:4px;font-size:13px;color:#000;transform:scaleX(0.987);transform-origin:0 0;">1000000000</span></div>
<svg class="b" style="left:756px;top:816px;" width="7" height="7" viewBox="0 0 7 7"><path d="M0 0 L6 0 L0 6 Z" fill="#1e7a37"/></svg>
<div class="c" style="left:820px;top:816px;width:63px;"><span class="t" style="left:1.90px;top:4px;font-size:13px;color:#000;transform:scaleX(0.939);transform-origin:0 0;">TEKTANA</span></div>
<div class="c" style="left:884px;top:816px;width:63px;"><span class="t" style="left:1.90px;top:4px;font-size:13px;color:#000;transform:scaleX(0.987);transform-origin:0 0;">1000000000</span></div>
<div class="c" style="left:948px;top:816px;width:63px;"><span class="t" style="left:1.90px;top:4px;font-size:13px;color:#000;transform:scaleX(0.966);transform-origin:0 0;">Tanpa Fas</span></div>
<div class="c" style="left:1012px;top:816px;width:63px;"><span class="t" style="left:1.90px;top:4px;font-size:13px;color:#000;transform:scaleX(0.983);transform-origin:0 0;">Pasal 4 Aya</span></div>
<div class="c" style="left:1076px;top:816px;width:63px;"><span class="t" style="left:1.90px;top:4px;font-size:13px;color:#000;transform:scaleX(1.0);transform-origin:0 0;">28-409-22</span></div>
<div class="c" style="left:1140px;top:816px;width:63px;"><span class="t" style="left:1.90px;top:4px;font-size:13px;color:#000;transform:scaleX(1.05);transform-origin:0 0;">Pekerjaan</span></div>
<div class="c" style="left:1204px;top:816px;width:106px;"><span class="t" style="left:16.17px;top:4px;font-size:13px;color:#000;transform:scaleX(0.987);transform-origin:100% 0;">76.000.000,00</span></div>
<div class="c" style="left:1311px;top:816px;width:63px;"><span class="t" style="left:35.86px;top:4px;font-size:13px;color:#000;transform:scaleX(1.027);transform-origin:100% 0;">1,75</span></div>
<div class="c" style="left:1375px;top:816px;width:99px;"><span class="t" style="left:16.40px;top:4px;font-size:13px;color:#000;transform:scaleX(0.987);transform-origin:100% 0;">1.330.000,00</span></div>
<div class="c" style="left:1475px;top:816px;width:106px;"><span class="t" style="left:16.17px;top:4px;font-size:13px;color:#000;transform:scaleX(0.987);transform-origin:100% 0;">74.670.000,00</span></div>
<div class="c" style="left:1582px;top:816px;width:63px;"><span class="t" style="left:1.90px;top:4px;font-size:13px;color:#000;transform:scaleX(1.01);transform-origin:0 0;">Surat Tagi</span></div>
<div class="c" style="left:1646px;top:816px;width:63px;"><span class="t" style="left:1.90px;top:4px;font-size:13px;color:#000;transform:scaleX(1.04);transform-origin:0 0;">04 Desember</span></div>
<div class="c" style="left:1710px;top:816px;width:63px;"><span class="t" style="left:1.90px;top:4px;font-size:13px;color:#000;transform:scaleX(0.965);transform-origin:0 0;">014.TIJ.XII.</span></div>
<div class="c" style="left:1774px;top:816px;width:63px;"><span class="t" style="left:1.90px;top:4px;font-size:13px;color:#000;transform:scaleX(0.987);transform-origin:0 0;">0716548788</span></div>
<svg class="b" style="left:1774px;top:816px;" width="7" height="7" viewBox="0 0 7 7"><path d="M0 0 L6 0 L0 6 Z" fill="#1e7a37"/></svg>
<div class="c" style="left:1838px;top:816px;width:60px;"><span class="t" style="left:1.90px;top:4px;font-size:13px;color:#000;transform:scaleX(0.987);transform-origin:0 0;">0716548788</span></div>
<div class="c" style="left:436px;top:836px;width:63px;"><span class="t" style="left:46.48px;top:4px;font-size:13px;color:#000;transform:scaleX(0.987);transform-origin:100% 0;">15</span></div>
<div class="c" style="left:500px;top:836px;width:63px;"><span class="t" style="left:1.90px;top:4px;font-size:13px;color:#000;transform:scaleX(0.975);transform-origin:0 0;">25081559C</span></div>
<div class="c" style="left:564px;top:836px;width:63px;"><span class="t" style="left:1.90px;top:4px;font-size:13px;color:#000;transform:scaleX(0.986);transform-origin:0 0;">12-2025</span></div>
<div class="c" style="left:628px;top:836px;width:63px;"><span class="t" style="left:1.90px;top:4px;font-size:13px;color:#000;transform:scaleX(1.0);transform-origin:0 0;">FINAL</span></div>
<div class="c" style="left:692px;top:836px;width:63px;"><span class="t" style="left:1.90px;top:4px;font-size:13px;color:#000;transform:scaleX(1.005);transform-origin:0 0;">NORMAL</span></div>
<div class="c" style="left:756px;top:836px;width:63px;"><span class="t" style="left:1.90px;top:4px;font-size:13px;color:#000;transform:scaleX(0.987);transform-origin:0 0;">1000000000</span></div>
<svg class="b" style="left:756px;top:836px;" width="7" height="7" viewBox="0 0 7 7"><path d="M0 0 L6 0 L0 6 Z" fill="#1e7a37"/></svg>
<div class="c" style="left:820px;top:836px;width:63px;"><span class="t" style="left:1.90px;top:4px;font-size:13px;color:#000;transform:scaleX(0.939);transform-origin:0 0;">TEKTANA</span></div>
<div class="c" style="left:884px;top:836px;width:63px;"><span class="t" style="left:1.90px;top:4px;font-size:13px;color:#000;transform:scaleX(0.987);transform-origin:0 0;">1000000000</span></div>
<div class="c" style="left:948px;top:836px;width:63px;"><span class="t" style="left:1.90px;top:4px;font-size:13px;color:#000;transform:scaleX(0.966);transform-origin:0 0;">Tanpa Fas</span></div>
<div class="c" style="left:1012px;top:836px;width:63px;"><span class="t" style="left:1.90px;top:4px;font-size:13px;color:#000;transform:scaleX(0.983);transform-origin:0 0;">Pasal 4 Aya</span></div>
<div class="c" style="left:1076px;top:836px;width:63px;"><span class="t" style="left:1.90px;top:4px;font-size:13px;color:#000;transform:scaleX(1.0);transform-origin:0 0;">28-409-22</span></div>
<div class="c" style="left:1140px;top:836px;width:63px;"><span class="t" style="left:1.90px;top:4px;font-size:13px;color:#000;transform:scaleX(1.05);transform-origin:0 0;">Pekerjaan</span></div>
<div class="c" style="left:1204px;top:836px;width:106px;"><span class="t" style="left:8.94px;top:4px;font-size:13px;color:#000;transform:scaleX(0.987);transform-origin:100% 0;">300.000.000,00</span></div>
<div class="c" style="left:1311px;top:836px;width:63px;"><span class="t" style="left:35.86px;top:4px;font-size:13px;color:#000;transform:scaleX(1.027);transform-origin:100% 0;">1,75</span></div>
<div class="c" style="left:1375px;top:836px;width:99px;"><span class="t" style="left:16.40px;top:4px;font-size:13px;color:#000;transform:scaleX(0.987);transform-origin:100% 0;">5.250.000,00</span></div>
<div class="c" style="left:1475px;top:836px;width:106px;"><span class="t" style="left:8.94px;top:4px;font-size:13px;color:#000;transform:scaleX(0.987);transform-origin:100% 0;">294.750.000,00</span></div>
<div class="c" style="left:1582px;top:836px;width:63px;"><span class="t" style="left:1.90px;top:4px;font-size:13px;color:#000;transform:scaleX(1.01);transform-origin:0 0;">Surat Tagi</span></div>
<div class="c" style="left:1646px;top:836px;width:63px;"><span class="t" style="left:1.90px;top:4px;font-size:13px;color:#000;transform:scaleX(1.04);transform-origin:0 0;">31 Desember</span></div>
<div class="c" style="left:1710px;top:836px;width:63px;"><span class="t" style="left:1.90px;top:4px;font-size:13px;color:#000;transform:scaleX(1.02);transform-origin:0 0;">013/TIJ/XII</span></div>
<div class="c" style="left:1774px;top:836px;width:63px;"><span class="t" style="left:1.90px;top:4px;font-size:13px;color:#000;transform:scaleX(0.987);transform-origin:0 0;">0019841542</span></div>
<svg class="b" style="left:1774px;top:836px;" width="7" height="7" viewBox="0 0 7 7"><path d="M0 0 L6 0 L0 6 Z" fill="#1e7a37"/></svg>
<div class="c" style="left:1838px;top:836px;width:60px;"><span class="t" style="left:1.90px;top:4px;font-size:13px;color:#000;transform:scaleX(0.987);transform-origin:0 0;">0019841542</span></div>
<div class="b" style="left:249px;top:337px;width:121px;height:479px;background:rgba(0,0,0,0.205);"></div>
<div class="b" style="left:246px;top:334px;width:2px;height:502px;background:#217346;"></div>
<div class="b" style="left:371px;top:334px;width:2px;height:500px;background:#217346;"></div>
<div class="b" style="left:246px;top:334px;width:127px;height:2px;background:#217346;"></div>
<div class="b" style="left:246px;top:835px;width:125px;height:2px;background:#fff;"></div>
<div class="b" style="left:246px;top:835px;width:125px;height:2px;background:repeating-linear-gradient(90deg,#217346 0 6px,transparent 6px 9px);"></div>
<div class="b" style="left:246px;top:854px;width:125px;height:2px;background:#fff;"></div>
<div class="b" style="left:246px;top:854px;width:125px;height:2px;background:repeating-linear-gradient(90deg,#217346 0 6px,transparent 6px 9px);"></div>
<div class="b" style="left:246px;top:837px;width:2px;height:17px;background:#fff;"></div>
<div class="b" style="left:246px;top:837px;width:2px;height:17px;background:repeating-linear-gradient(180deg,#217346 0 6px,transparent 6px 9px);"></div>
<div class="b" style="left:370px;top:839px;width:2px;height:15px;background:#fff;"></div>
<div class="b" style="left:370px;top:839px;width:2px;height:15px;background:repeating-linear-gradient(180deg,#217346 0 6px,transparent 6px 9px);"></div>
<div class="b" style="left:368px;top:832px;width:7px;height:7px;background:#fff;"></div>
<div class="b" style="left:369px;top:833px;width:5px;height:5px;background:#217346;"></div>
<div class="b" style="left:370px;top:834px;width:3px;height:3px;background:#e8f0ea;"></div>
<div class="b" style="left:375px;top:839px;width:61px;height:23px;background:#fafafa;border:1px solid #ababab;box-sizing:border-box;"></div>
<svg class="b" style="left:379px;top:841px;" width="17" height="18" viewBox="0 0 17 18"><defs><linearGradient id="pg" x1="0" y1="0" x2="1" y2="0"><stop offset="0" stop-color="#e8973a"/><stop offset="1" stop-color="#fde3c0"/></linearGradient></defs>
<path d="M1.2 3.8 H3 V15.4 H6.8 V16.6 H1.2 Z" fill="url(#pg)"/><rect x="1.2" y="3.8" width="1.5" height="12.8" fill="#e8973a"/>
<path d="M3.6 6 V3.4 H5.4 C5.4 0.6 10.2 0.6 10.2 3.4 H12 V6" fill="none" stroke="#333" stroke-width="1.1"/>
<path d="M11 3.4 H12.6 V6.4" fill="none" stroke="#333" stroke-width="1"/>
<rect x="8.9" y="8.6" width="6" height="8" fill="#fff" stroke="#222" stroke-width="1.3"/></svg>
<span class="t" style="left:397.87px;top:845px;font-size:12.5px;color:#444;transform:scaleX(0.9384);transform-origin:0 0;">(Ctrl)</span>
<svg class="b" style="left:426.5px;top:849px;" width="7" height="4" viewBox="0 0 7 4"><path d="M0.4 0.2 H5.8 L3.1 3 Z" fill="#222"/></svg>
<div class="b" style="left:375px;top:865px;width:24px;height:24px;background:#fff;border:1.3px solid #2a6044;box-sizing:border-box;"></div>
<svg class="b" style="left:378px;top:868px;" width="18" height="18" viewBox="0 0 18 18"><path d="M9 2.6 H16.6 V15.2 H1.4 V11" fill="none" stroke="#222" stroke-width="1.3"/><path d="M9 4.4 H15" stroke="#222" stroke-width="1"/>
<path d="M4.6 9.6 H13.4 V12.6 H4.6 Z" fill="#fff" stroke="#222" stroke-width="1.1"/><path d="M7.6 9.4 V7.4 H9.4 V9.4" fill="none" stroke="#222" stroke-width="1"/>
<path d="M4.8 0.6 L0.8 6 H3.2 L1.4 10 L7 4 H4.6 L6.8 0.6 Z" fill="#f19a1a"/></svg>
<div class="b" style="left:1899px;top:236px;width:21px;height:747px;background:#fff;"></div>
<div class="b" style="left:1902px;top:948px;width:15px;height:20px;background:#f0f0f0;"></div>
<div class="b" style="left:1902px;top:238px;width:15px;height:15px;background:#fff;border:1px solid #ababab;box-sizing:border-box;"></div>
<svg class="b" style="left:1905px;top:242px;" width="9" height="7" viewBox="0 0 9 7"><path d="M0.8 5.8 H8.2 L4.5 1.2 Z" fill="#1a1a1a"/></svg>
<div class="b" style="left:1902px;top:252px;width:15px;height:696px;background:#fff;border:1px solid #ababab;box-sizing:border-box;"></div>
<div class="b" style="left:1902px;top:252px;width:15px;height:2px;background:#9a9a9a;"></div>
<div class="b" style="left:1902px;top:968px;width:15px;height:15px;background:#fff;border:1px solid #ababab;box-sizing:border-box;"></div>
<svg class="b" style="left:1905px;top:972px;" width="9" height="7" viewBox="0 0 9 7"><path d="M0.8 1.2 H8.2 L4.5 5.8 Z" fill="#1a1a1a"/></svg>
<div class="b" style="left:0px;top:983px;width:1920px;height:28px;background:#f0f0f0;"></div>
<div class="b" style="left:0px;top:983px;width:1140px;height:28px;background:#f5f5f5;"></div>
<svg class="b" style="left:26px;top:991px;" width="6" height="9" viewBox="0 0 6 9"><path d="M5.2 1 V8 L1.2 4.5 Z" fill="#1f5637"/></svg>
<svg class="b" style="left:55px;top:991px;" width="6" height="9" viewBox="0 0 6 9"><path d="M1 1 V8 L5 4.5 Z" fill="#c0c0c0"/></svg>
<div class="b" style="left:81px;top:998px;width:2px;height:2px;background:#333;"></div>
<div class="b" style="left:85px;top:998px;width:2px;height:2px;background:#333;"></div>
<div class="b" style="left:89px;top:998px;width:2px;height:2px;background:#333;"></div>
<div class="b" style="left:103px;top:985px;width:95px;height:22px;background:#244a7c;"></div>
<span class="t" style="left:116.01px;top:990px;font-size:12.5px;color:#fff;transform:scaleX(0.9382);transform-origin:0 0;">GL RK (YTD)</span>
<div class="b" style="left:203px;top:985px;width:105px;height:22px;background:#e36c0a;"></div>
<span class="t" style="left:214.02px;top:990px;font-size:12.5px;color:#fff;transform:scaleX(0.9278);transform-origin:0 0;">GL ACCURATE</span>
<div class="b" style="left:313px;top:985px;width:105px;height:22px;background:#e36c0a;"></div>
<span class="t" style="left:324.34px;top:990px;font-size:12.5px;color:#fff;transform:scaleX(0.9201);transform-origin:0 0;">TB ACCURATE</span>
<div class="b" style="left:423px;top:985px;width:105px;height:22px;background:#e36c0a;"></div>
<span class="t" style="left:433.66px;top:990px;font-size:12.5px;color:#fff;transform:scaleX(0.9205);transform-origin:0 0;">BS ACCURATE</span>
<div class="b" style="left:532px;top:985px;width:104px;height:22px;background:#e36c0a;"></div>
<span class="t" style="left:542.65px;top:990px;font-size:12.5px;color:#fff;transform:scaleX(0.9237);transform-origin:0 0;">PL ACCURATE</span>
<div class="b" style="left:641px;top:985px;width:34px;height:22px;background:#0a70c4;"></div>
<span class="t" style="left:649.69px;top:990px;font-size:12.5px;color:#fff;transform:scaleX(0.8888);transform-origin:0 0;">BS</span>
<div class="b" style="left:680px;top:985px;width:34px;height:22px;background:#0a70c4;"></div>
<span class="t" style="left:689.68px;top:990px;font-size:12.5px;color:#fff;transform:scaleX(0.8954);transform-origin:0 0;">PL</span>
<div class="b" style="left:100px;top:987px;width:1px;height:18px;background:#c9c9c9;"></div>
<div class="b" style="left:200px;top:987px;width:1px;height:18px;background:#c9c9c9;"></div>
<div class="b" style="left:310px;top:987px;width:1px;height:18px;background:#c9c9c9;"></div>
<div class="b" style="left:420px;top:987px;width:1px;height:18px;background:#c9c9c9;"></div>
<div class="b" style="left:530px;top:987px;width:1px;height:18px;background:#c9c9c9;"></div>
<div class="b" style="left:638px;top:987px;width:1px;height:18px;background:#c9c9c9;"></div>
<div class="b" style="left:677px;top:987px;width:1px;height:18px;background:#c9c9c9;"></div>
<div class="b" style="left:716px;top:987px;width:1px;height:18px;background:#c9c9c9;"></div>
<span class="t" style="left:728.37px;top:990px;font-size:12.5px;color:#444;transform:scaleX(1.0670);transform-origin:0 0;">INV vs UM</span>
<div class="b" style="left:805px;top:982px;width:110px;height:24px;background:#fff;"></div>
<div class="b" style="left:805px;top:983px;width:1px;height:23px;background:#c9c9c9;"></div>
<div class="b" style="left:914px;top:983px;width:1px;height:23px;background:#c9c9c9;"></div>
<div class="b" style="left:805px;top:1005px;width:110px;height:2px;background:#217346;"></div>
<span class="t" style="left:817.45px;top:990px;font-size:12.5px;color:#217346;font-weight:bold;">UM vs BUPOT</span>
<span class="t" style="left:928.65px;top:990px;font-size:12.5px;color:#444;transform:scaleX(0.9271);transform-origin:0 0;">LIST BUPOT</span>
<div class="b" style="left:1010px;top:987px;width:1px;height:18px;background:#c9c9c9;"></div>
<svg class="b" style="left:1043px;top:987px;" width="18" height="18" viewBox="0 0 18 18"><circle cx="9" cy="9" r="7.6" fill="none" stroke="#6a6a6a" stroke-width="1.1"/><path d="M9 5 V13 M5 9 H13" stroke="#6a6a6a" stroke-width="1.3"/></svg>
<div class="b" style="left:1152px;top:991px;width:2px;height:2px;background:#8a8a8a;"></div>
<div class="b" style="left:1152px;top:996px;width:2px;height:2px;background:#8a8a8a;"></div>
<div class="b" style="left:1152px;top:1001px;width:2px;height:2px;background:#8a8a8a;"></div>
<div class="b" style="left:1169px;top:989px;width:15px;height:15px;background:#fff;border:1px solid #ababab;box-sizing:border-box;"></div>
<svg class="b" style="left:1173px;top:992px;" width="7" height="9" viewBox="0 0 7 9"><path d="M5.6 0.8 V8.2 L1.2 4.5 Z" fill="#1a1a1a"/></svg>
<div class="b" style="left:1298px;top:989px;width:511px;height:15px;background:#fff;border:1px solid #ababab;box-sizing:border-box;"></div>
<div class="b" style="left:1884px;top:989px;width:15px;height:15px;background:#fff;border:1px solid #ababab;box-sizing:border-box;"></div>
<svg class="b" style="left:1888px;top:992px;" width="7" height="9" viewBox="0 0 7 9"><path d="M1.4 0.8 V8.2 L5.8 4.5 Z" fill="#1a1a1a"/></svg>
<div class="b" style="left:0px;top:1011px;width:1920px;height:21px;background:#217346;"></div>
<span class="t" style="left:7.09px;top:1016px;font-size:12px;color:#fff;transform:scaleX(0.9297);transform-origin:0 0;">Select destination and press ENTER or choose Paste</span>
<span class="t" style="left:1256.58px;top:1016px;font-size:12px;color:#fff;transform:scaleX(0.9078);transform-origin:0 0;">Average: -Rp68.657.100,00</span>
<span class="t" style="left:1406.63px;top:1016px;font-size:12px;color:#fff;transform:scaleX(0.9387);transform-origin:0 0;">Count: 25</span>
<span class="t" style="left:1472.11px;top:1016px;font-size:12px;color:#fff;transform:scaleX(0.9044);transform-origin:0 0;">Sum: -Rp1.716.427.500,00</span>
<div class="b" style="left:1620px;top:1011px;width:39px;height:21px;background:#185c37;"></div>
<svg class="b" style="left:1632px;top:1014px;" width="15" height="14" viewBox="0 0 15 14"><rect x="1" y="1" width="12.6" height="11.6" fill="none" stroke="#fff" stroke-width="1.2"/><path d="M5.2 1 V12.6 M9.4 1 V12.6 M1 4.9 H13.6 M1 8.8 H13.6" stroke="#fff" stroke-width="1"/></svg>
<svg class="b" style="left:1673px;top:1014px;" width="15" height="14" viewBox="0 0 15 14"><rect x="1" y="1" width="12.6" height="11.6" fill="none" stroke="#fff" stroke-width="1.2"/><rect x="3.8" y="3.8" width="7" height="6" fill="none" stroke="#fff" stroke-width="1"/><path d="M5.4 5.8 H9.2 M5.4 7.8 H9.2" stroke="#fff" stroke-width="0.8"/></svg>
<svg class="b" style="left:1713px;top:1014px;" width="15" height="14" viewBox="0 0 15 14"><rect x="1" y="1" width="12.6" height="11.6" fill="none" stroke="#fff" stroke-width="1.2"/><path d="M5.2 1 V8 H13.6 M9.4 1 V8" fill="none" stroke="#fff" stroke-width="1"/></svg>
<div class="b" style="left:1746px;top:1021px;width:7px;height:1px;background:#fff;"></div>
<div class="b" style="left:1759px;top:1021px;width:100px;height:1px;background:#fff;"></div>
<div class="b" style="left:1807px;top:1016px;width:5px;height:11px;background:#fff;"></div>
<div class="b" style="left:1864px;top:1021px;width:9px;height:1px;background:#fff;"></div>
<div class="b" style="left:1868px;top:1017px;width:1px;height:9px;background:#fff;"></div>
<span class="t" style="left:1885.82px;top:1016px;font-size:12px;color:#fff;transform:scaleX(0.8518);transform-origin:0 0;">100%</span>
<div class="b" style="left:0px;top:1032px;width:1920px;height:48px;background:#d9d9d9;"></div>
<div class="b" style="left:0px;top:1032px;width:1920px;height:1px;background:#d6e0d9;"></div>
<div class="b" style="left:0px;top:1033px;width:1920px;height:3px;background:#dad8d8;"></div>
<div class="b" style="left:0px;top:1036px;width:1920px;height:4px;background:#dcdadc;"></div>
<svg class="b" style="left:18px;top:1042px;" width="28" height="27" viewBox="0 0 28 27"><defs><linearGradient id="sun" x1="0" y1="0" x2="1" y2="1"><stop offset="0" stop-color="#fbb034"/><stop offset="1" stop-color="#f7801c"/></linearGradient>
<linearGradient id="cl" x1="0" y1="0" x2="0" y2="1"><stop offset="0" stop-color="#e9f1fb"/><stop offset="1" stop-color="#b4cff0"/></linearGradient></defs>
<circle cx="12.4" cy="12" r="10.2" fill="url(#sun)"/>
<path d="M8 24.8 C3.2 24.8 2.8 18.8 7 18 C7.4 13.6 13.4 12.4 15.6 16 C18.2 13.6 22.6 15.2 22.4 18.6 C26.6 18.4 26.8 24.8 22.4 24.8 Z" fill="url(#cl)"/></svg>
<span class="t" style="left:50.98px;top:1042px;font-size:12.5px;color:#1a1a1a;transform:scaleX(0.8748);transform-origin:0 0;">30°C</span>
<span class="t" style="left:50.86px;top:1057.5px;font-size:12.5px;color:#5e5e5e;transform:scaleX(0.9468);transform-origin:0 0;">Sebagian cerah</span>
<svg class="b" style="left:617px;top:1044px;" width="24" height="24" viewBox="0 0 24 24"><defs><linearGradient id="wg" x1="0" y1="0" x2="1" y2="1"><stop offset="0" stop-color="#4cc2ff"/><stop offset="1" stop-color="#0a6ed1"/></linearGradient></defs>
<rect x="0" y="0.6" width="11.2" height="11.2" rx="0.8" fill="url(#wg)"/><rect x="12.4" y="0.6" width="11.2" height="11.2" rx="0.8" fill="url(#wg)"/>
<rect x="0" y="13" width="11.2" height="11" rx="0.8" fill="url(#wg)"/><rect x="12.4" y="13" width="11.2" height="11" rx="0.8" fill="url(#wg)"/></svg>
<div class="b" style="left:654px;top:1041px;width:218px;height:31px;background:#f1f1f1;border:1px solid #e4e4e4;box-sizing:border-box;border-radius:16px;box-shadow:0 1px 1px rgba(0,0,0,0.12);"></div>
<svg class="b" style="left:664px;top:1048px;" width="17" height="17" viewBox="0 0 17 17"><circle cx="7.4" cy="7.2" r="5.6" fill="none" stroke="#222" stroke-width="1.7"/><path d="M11.4 11.4 L15.4 15.4" stroke="#222" stroke-width="1.9" stroke-linecap="round"/></svg>
<span class="t" style="left:690.00px;top:1049px;font-size:14.5px;color:#5a5a5a;transform:scaleX(0.9066);transform-origin:0 0;">Search</span>
<svg class="b" style="left:823px;top:1042px;" width="46" height="29" viewBox="0 0 46 29"><ellipse cx="23" cy="25.6" rx="20" ry="2.4" fill="#e9d2b0"/>
<path d="M6 6 C8 2.4 12 2 14.6 5.4 C20 6.4 26 6 30.6 8.6 C34 10.6 34.6 14 34 17 L35.4 24.6 H33.4 L31.4 18 L28.6 24.6 H26.8 L27.8 17.4 C23.6 18.2 19.6 17.8 16.4 16.4 L16.8 24.6 H14.8 L13.4 17.4 L12.2 24.6 H10.4 L10.6 14.4 C9.6 12.4 9.4 10.6 9.8 9 L6.4 10.6 C4.4 10.4 4.4 8.4 6 6 Z" fill="#eceaf2" stroke="#5d5877" stroke-width="0.9"/>
<path d="M13.6 6.4 L12.4 10 M16.4 6.8 L15.4 12.4 M19.4 7.4 L18.4 15.4 M22.4 7.6 L21.6 16.4 M25.4 7.8 L25 16.6 M28.4 8.6 L28.4 16 M31 10.2 L31.4 15 M10.8 5 L10 8.4" stroke="#4a4566" stroke-width="1.2"/>
<path d="M34 11.6 C37 13 37.6 17 38.6 19.6" fill="none" stroke="#4a4566" stroke-width="1.4"/></svg>
<div class="b" style="left:885px;top:1051px;width:18px;height:16px;background:#222;border-radius:1.5px;"></div>
<div class="b" style="left:891px;top:1044.5px;width:17.5px;height:16.5px;background:rgba(245,245,245,0.82);border-radius:1.5px;"></div>
<svg class="b" style="left:928px;top:1043px;" width="26" height="24" viewBox="0 0 26 24"><defs><linearGradient id="cp1" x1="0" y1="0" x2="1" y2="1"><stop offset="0" stop-color="#2aa7ee"/><stop offset="0.35" stop-color="#51c06b"/><stop offset="0.6" stop-color="#f5b52c"/><stop offset="1" stop-color="#ef4a8b"/></linearGradient>
<linearGradient id="cp2" x1="1" y1="0" x2="0" y2="1"><stop offset="0" stop-color="#8a5cf0"/><stop offset="0.5" stop-color="#d94fc4"/><stop offset="1" stop-color="#f7853a"/></linearGradient></defs>
<path d="M9 1.4 H15.4 C17.4 1.4 18.4 2.6 18.8 4.2 L20 8.4 H22.6 C25 8.4 25.6 10.6 24.8 12.6 L22.4 19.4 C21.6 21.6 20.2 22.6 18 22.6 H10.6 C8.6 22.6 7.6 21.4 7.2 19.8 L6 15.6 H3.4 C1 15.6 0.4 13.4 1.2 11.4 L3.6 4.6 C4.4 2.4 6.2 1.4 9 1.4 Z" fill="url(#cp1)"/>
<path d="M13.4 1.4 H15.4 C17.4 1.4 18.4 2.6 18.8 4.2 L20 8.4 H22.6 C25 8.4 25.6 10.6 24.8 12.6 L22.4 19.4 C21.6 21.6 20.2 22.6 18 22.6 H14 C16 22 16.6 20 17 18 L18.4 11 C18.8 9 17 8.4 15 8.4 Z" fill="url(#cp2)"/>
<path d="M9.4 8.4 H16.6 L15 15.6 H8 Z" fill="#fff" opacity="0.55"/></svg>
<svg class="b" style="left:972px;top:1043px;" width="26" height="26" viewBox="0 0 26 26"><defs><linearGradient id="eg1" x1="0" y1="0" x2="1" y2="1"><stop offset="0" stop-color="#35c1f1"/><stop offset="1" stop-color="#0b57b9"/></linearGradient>
<linearGradient id="eg2" x1="0" y1="0" x2="1" y2="0"><stop offset="0" stop-color="#2fb6e8"/><stop offset="0.5" stop-color="#47d36e"/><stop offset="1" stop-color="#7be36a"/></linearGradient></defs>
<circle cx="13" cy="13" r="12.4" fill="url(#eg1)"/>
<path d="M1 11 C2 4.6 7.4 0.6 13 0.6 C20 0.6 25.4 5.6 25.4 12 C25.4 16 22.4 18.2 19.4 18.2 C16.4 18.2 15.4 16.6 16 15.4 C16.6 14.2 17 13.4 16.6 12 C16 9.6 13.6 8 11 8 C6.4 8 2.2 11 1 11 Z" fill="url(#eg2)"/>
<path d="M10.6 12.6 C8.6 16.6 10.6 22 16 23.4 C19.6 24.2 22.6 22.6 24 20.6 C21 22 17 21.4 15 19 C13.4 17 13.4 14.6 14.4 13 Z" fill="#0c59a4" opacity="0.85"/></svg>
<svg class="b" style="left:1016px;top:1043px;" width="25" height="26" viewBox="0 0 25 26"><path d="M7.6 6.4 V4 C7.6 2.4 8.8 1.4 10.2 1.4 H14.8 C16.2 1.4 17.4 2.4 17.4 4 V6.4" fill="none" stroke="#36a3f2" stroke-width="1.8"/>
<rect x="0.8" y="6" width="23.4" height="19" rx="2.4" fill="#1258a8"/><rect x="0.8" y="6" width="23.4" height="9" rx="2.4" fill="#1a6cc8"/>
<rect x="7.6" y="10.4" width="4.4" height="4.4" fill="#f25022"/><rect x="13" y="10.4" width="4.4" height="4.4" fill="#7fba00"/><rect x="7.6" y="15.8" width="4.4" height="4.4" fill="#00a4ef"/><rect x="13" y="15.8" width="4.4" height="4.4" fill="#ffb900"/></svg>
<svg class="b" style="left:1060px;top:1043px;" width="26" height="26" viewBox="0 0 26 26"><path d="M13 1.6 C19.4 1.6 24.4 6.6 24.4 12.8 C24.4 19 19.4 24 13 24 C11 24 9.2 23.6 7.4 22.6 L1.8 24.4 L3.6 19 C2.4 17.2 1.6 15 1.6 12.8 C1.6 6.6 6.6 1.6 13 1.6 Z" fill="#d9d9d9" stroke="#2d9e72" stroke-width="2.1"/>
<path d="M9.4 7.4 C8.6 7.2 7.6 8.2 7.6 9.8 C7.6 13.6 12.2 18.4 16.4 18.4 C17.8 18.4 18.8 17.4 18.8 16.4 L16 14.6 L14.6 15.8 C13 15.2 11 13.2 10.4 11.6 L11.6 10.4 Z" fill="#2d9e72"/></svg>
<svg class="b" style="left:1104px;top:1043px;" width="26" height="26" viewBox="0 0 26 26"><circle cx="12.6" cy="13" r="12" fill="#fbbc05"/>
<path d="M12.6 1 A12 12 0 0 1 23 7 H12.6 A6 6 0 0 0 7.4 10 L2.2 7 A12 12 0 0 1 12.6 1 Z" fill="#e33b2e"/>
<path d="M2.2 7 L7.4 16 A6 6 0 0 0 12.6 19 L9.6 24.6 A12 12 0 0 1 2.2 7 Z" fill="#2da94f"/>
<path d="M2.2 7 A12 12 0 0 1 23 7 H12.6 Z" fill="#e33b2e"/>
<path d="M2.2 7 L12.6 13 L8.4 24.2 A12 12 0 0 1 2.2 7 Z" fill="#2da94f"/>
<circle cx="12.6" cy="13" r="5.6" fill="#fff"/><circle cx="12.6" cy="13" r="4.4" fill="#4285f4"/></svg>
<svg class="b" style="left:1148px;top:1044px;" width="26" height="24" viewBox="0 0 26 24"><path d="M1 3.4 C1 2.2 1.8 1.4 3 1.4 H9 L11.4 4 H23 C24.2 4 25 4.8 25 6 V9 H1 Z" fill="#e6a817"/>
<rect x="1" y="5.6" width="24" height="17" rx="1.6" fill="#fbd04f"/><rect x="1" y="5.6" width="24" height="6" rx="1.6" fill="#fcdc6c"/>
<rect x="6" y="14.4" width="14" height="8.2" rx="1.2" fill="#1a73c7"/><rect x="6" y="18.6" width="14" height="4" fill="#2f8ee0"/></svg>
<div class="b" style="left:1158px;top:1072.5px;width:6px;height:2.5px;background:#8a8a8a;border-radius:1.2px;"></div>
<svg class="b" style="left:1192px;top:1043px;" width="26" height="26" viewBox="0 0 26 26"><circle cx="12.6" cy="13" r="12" fill="#fbbc05"/>
<path d="M12.6 1 A12 12 0 0 1 23 7 H12.6 A6 6 0 0 0 7.4 10 L2.2 7 A12 12 0 0 1 12.6 1 Z" fill="#e33b2e"/>
<path d="M2.2 7 L7.4 16 A6 6 0 0 0 12.6 19 L9.6 24.6 A12 12 0 0 1 2.2 7 Z" fill="#2da94f"/>
<path d="M2.2 7 A12 12 0 0 1 23 7 H12.6 Z" fill="#e33b2e"/>
<path d="M2.2 7 L12.6 13 L8.4 24.2 A12 12 0 0 1 2.2 7 Z" fill="#2da94f"/>
<circle cx="12.6" cy="13" r="5.6" fill="#fff"/><circle cx="12.6" cy="13" r="4.4" fill="#4285f4"/><circle cx="19.6" cy="6" r="5.4" fill="#d8432e"/><text x="17.6" y="8.8" font-family="Liberation Sans" font-size="7.5" fill="#f6c9a0">0</text></svg>
<div class="b" style="left:1202px;top:1072.5px;width:6px;height:2.5px;background:#8a8a8a;border-radius:1.2px;"></div>
<div class="b" style="left:1230px;top:1037.5px;width:35.5px;height:37.5px;background:#f1f1f1;border:1px solid #e6e6e6;box-sizing:border-box;border-radius:4px;"></div>
<svg class="b" style="left:1236px;top:1044px;" width="27" height="23" viewBox="0 0 27 23"><rect x="7" y="0.6" width="19" height="22" rx="1.6" fill="#21a366"/>
<rect x="16.6" y="0.6" width="9.4" height="7.4" fill="#33c481"/><rect x="7" y="8" width="9.6" height="7.2" fill="#107c41"/><rect x="16.6" y="8" width="9.4" height="7.2" fill="#21a366"/><rect x="7" y="15.2" width="19" height="7.4" rx="1.6" fill="#185c37"/>
<rect x="0.6" y="5.2" width="13" height="13" rx="1.3" fill="#107c41"/>
<path d="M4.2 8.2 L10 15.4 M10 8.2 L4.2 15.4" stroke="#fff" stroke-width="1.9"/></svg>
<div class="b" style="left:1241.5px;top:1072.5px;width:15px;height:2.5px;background:#0f7bd8;border-radius:1.2px;"></div>
<svg class="b" style="left:1283px;top:1044px;" width="21" height="25" viewBox="0 0 21 25"><path d="M1 1.6 C1 1 1.4 0.6 2 0.6 H18.4 C19 0.6 19.4 1 19.4 1.6 V22.6 C19.4 23.2 19 23.6 18.4 23.6 H5 L1 19.6 Z" fill="#fbfbfb" stroke="#2a3a6a" stroke-width="0.9"/>
<rect x="1" y="0.6" width="18.4" height="6.4" fill="#1c2a5a"/>
<path d="M3.6 3.8 H16.8" stroke="#cfd6ea" stroke-width="1"/><path d="M6.6 9.6 H13.8" stroke="#555" stroke-width="1"/>
<circle cx="10.2" cy="15" r="3.8" fill="#f6c62c" stroke="#d9a514" stroke-width="0.8"/><circle cx="10.2" cy="15" r="1.5" fill="#fde58a"/></svg>
<div class="b" style="left:1290px;top:1072.5px;width:6px;height:2.5px;background:#8a8a8a;border-radius:1.2px;"></div>
<svg class="b" style="left:1684px;top:1052px;" width="13" height="8" viewBox="0 0 13 8"><path d="M1.2 6.8 L6.4 1.6 L11.6 6.8" fill="none" stroke="#1a1a1a" stroke-width="1.5"/></svg>
<span class="t" style="left:1716.30px;top:1052px;font-size:11.5px;color:#1a1a1a;transform:scaleX(0.9516);transform-origin:0 0;">ENG</span>
<svg class="b" style="left:1757px;top:1047px;" width="18" height="18" viewBox="0 0 18 18"><rect x="1.2" y="1.6" width="11.4" height="9.6" fill="none" stroke="#1a1a1a" stroke-width="1.2"/><path d="M7 11.2 V14 M3.6 14.4 H10.6 M14 5.6 V16.4" stroke="#1a1a1a" stroke-width="1.2"/>
<rect x="12" y="1" width="4" height="5.4" rx="1.2" fill="#d9d9d9" stroke="#1a1a1a" stroke-width="1.1"/></svg>
<svg class="b" style="left:1781px;top:1049px;" width="18" height="14" viewBox="0 0 18 14"><path d="M1.2 4.6 H3.8 L7.6 1.4 V11.6 L3.8 8.6 H1.2 Z" fill="none" stroke="#1a1a1a" stroke-width="1.1"/><path d="M9.6 4.4 C10.6 5.6 10.6 7.6 9.6 8.8" fill="none" stroke="#1a1a1a" stroke-width="1"/>
<path d="M11.8 2.6 C13.6 5 13.6 8.2 11.8 10.6" fill="none" stroke="#b5b5b5" stroke-width="1"/><path d="M14 1 C16.6 4.4 16.6 8.8 14 12.2" fill="none" stroke="#c4c4c4" stroke-width="1"/></svg>
<span class="t" style="left:1848.74px;top:1042px;font-size:12.5px;color:#1a1a1a;transform:scaleX(0.8992);transform-origin:0 0;">15:45</span>
<span class="t" style="left:1815.94px;top:1057.5px;font-size:12.5px;color:#1a1a1a;transform:scaleX(0.9750);transform-origin:0 0;">31/01/2026</span>
<svg class="b" style="left:1884px;top:1048px;" width="16" height="17" viewBox="0 0 16 17"><path d="M7 1.6 C3.8 1.6 2.6 4.2 2.6 6.6 V9.4 L1 12.2 H13 L11.4 9.4 V6.6 C11.4 4.2 10.2 1.6 7 1.6 Z" fill="#1a1a1a"/><path d="M5.2 13.4 L7 15 L8.8 13.4 Z" fill="#1a1a1a"/>
<text x="4.2" y="9.4" font-family="Liberation Sans" font-size="6" font-weight="bold" fill="#d9d9d9">z</text><text x="9.6" y="5.4" font-family="Liberation Sans" font-size="7" font-weight="bold" fill="#1a1a1a">z</text></svg>
</body></html>
